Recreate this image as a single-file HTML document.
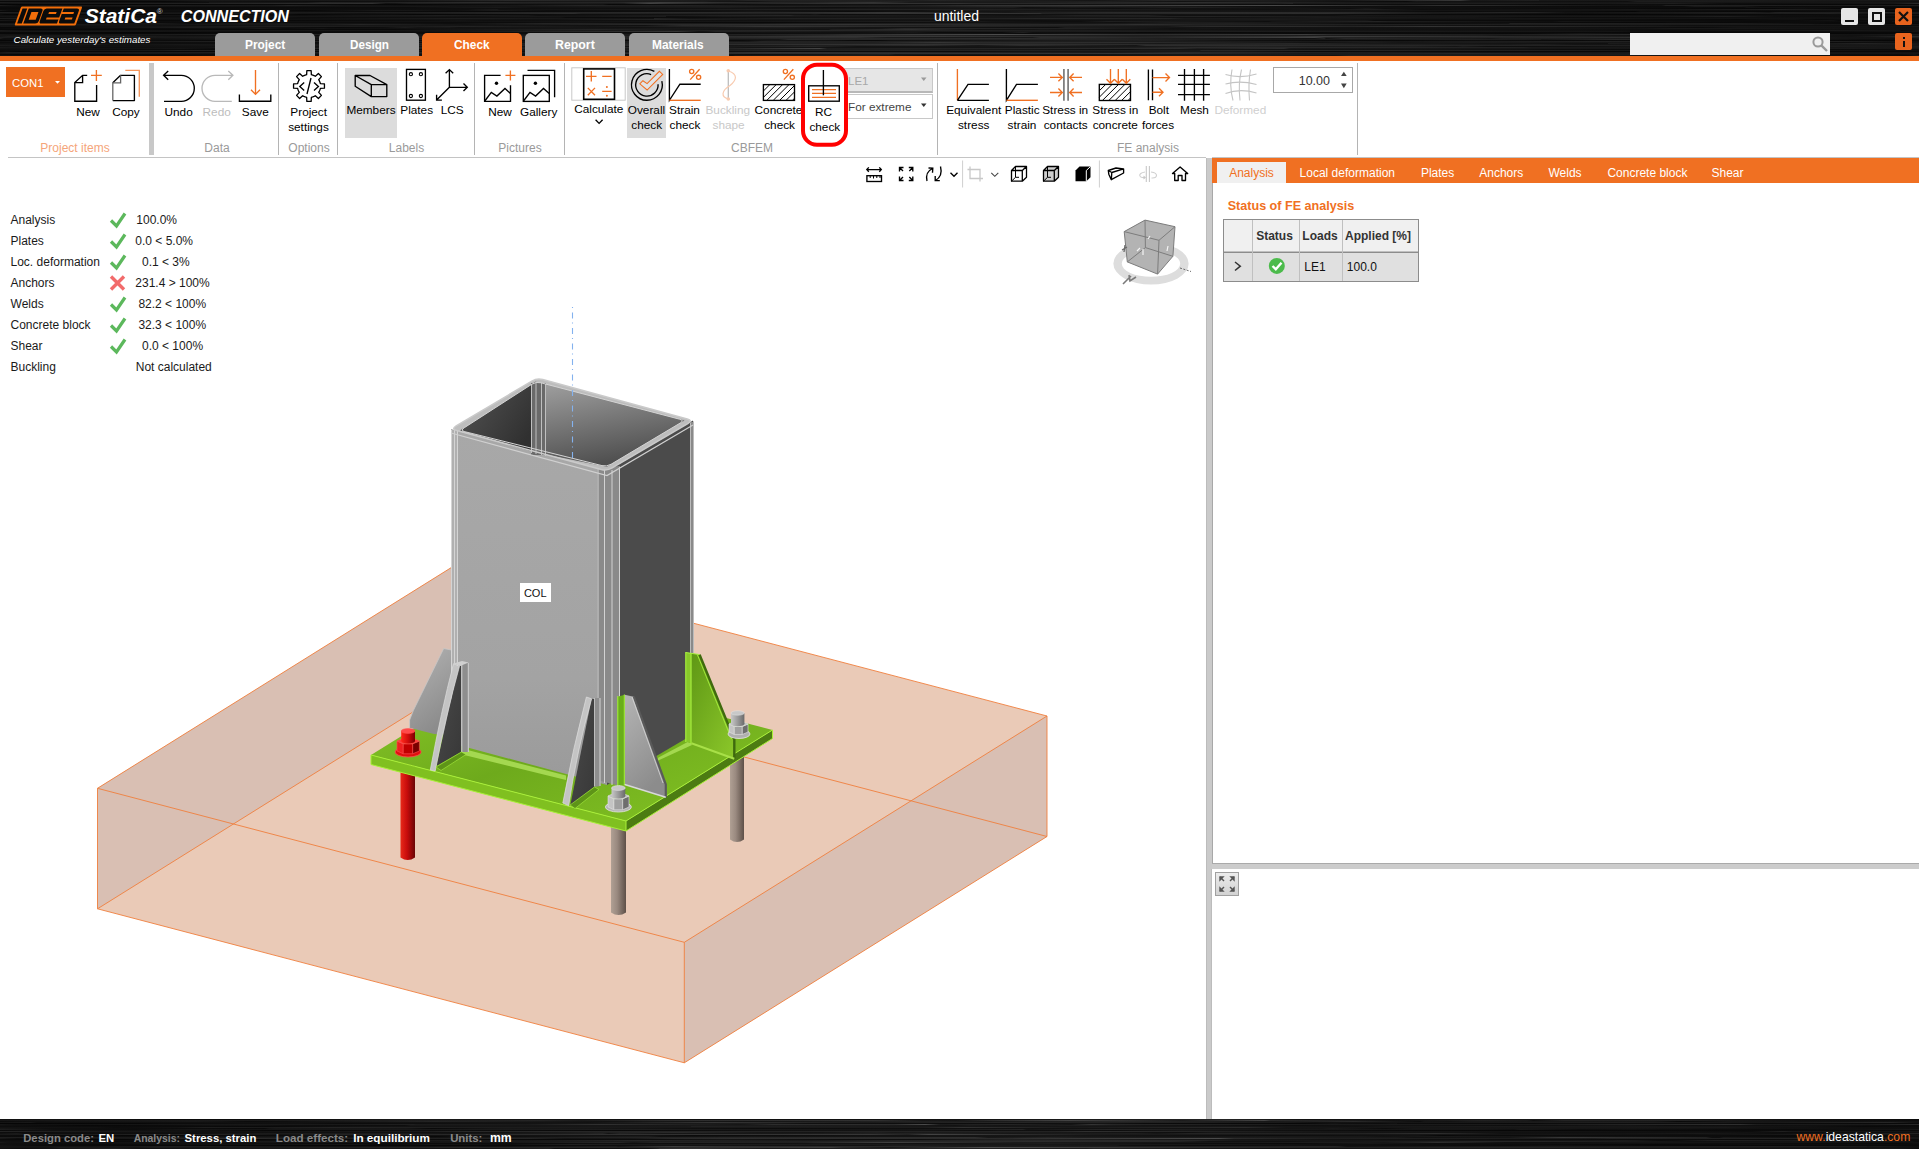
<!DOCTYPE html><html><head><meta charset='utf-8'><style>html,body{margin:0;padding:0;width:1919px;height:1149px;overflow:hidden;background:#fff;position:relative}body{font-family:'Liberation Sans',sans-serif}.t{position:absolute;white-space:pre;line-height:1;font-family:'Liberation Sans',sans-serif}svg{overflow:visible}</style></head><body><svg style='position:absolute;left:0px;top:0px;' width='1919' height='56' viewBox='0 0 1919 56'><defs><linearGradient id='br1_0' x1='0' x2='1' y1='0' y2='0'><stop offset='0.000' stop-color='rgb(30,30,30)'/><stop offset='0.063' stop-color='rgb(20,20,20)'/><stop offset='0.118' stop-color='rgb(25,25,25)'/><stop offset='0.210' stop-color='rgb(24,24,24)'/><stop offset='0.266' stop-color='rgb(42,42,42)'/><stop offset='0.380' stop-color='rgb(27,27,27)'/><stop offset='0.390' stop-color='rgb(36,36,36)'/><stop offset='0.472' stop-color='rgb(29,29,29)'/><stop offset='0.488' stop-color='rgb(37,37,37)'/><stop offset='0.569' stop-color='rgb(21,21,21)'/><stop offset='0.607' stop-color='rgb(38,38,38)'/><stop offset='0.696' stop-color='rgb(23,23,23)'/><stop offset='0.761' stop-color='rgb(56,56,56)'/><stop offset='0.767' stop-color='rgb(24,24,24)'/><stop offset='0.802' stop-color='rgb(32,32,32)'/><stop offset='0.802' stop-color='rgb(25,25,25)'/><stop offset='0.893' stop-color='rgb(27,27,27)'/><stop offset='1.000' stop-color='rgb(23,23,23)'/></linearGradient><linearGradient id='br1_1' x1='0' x2='1' y1='0' y2='0'><stop offset='0.000' stop-color='rgb(9,9,9)'/><stop offset='0.086' stop-color='rgb(8,8,8)'/><stop offset='0.108' stop-color='rgb(18,18,18)'/><stop offset='0.164' stop-color='rgb(13,13,13)'/><stop offset='0.309' stop-color='rgb(24,24,24)'/><stop offset='0.367' stop-color='rgb(27,27,27)'/><stop offset='0.371' stop-color='rgb(22,22,22)'/><stop offset='0.393' stop-color='rgb(19,19,19)'/><stop offset='0.404' stop-color='rgb(29,29,29)'/><stop offset='0.469' stop-color='rgb(33,33,33)'/><stop offset='0.480' stop-color='rgb(27,27,27)'/><stop offset='0.578' stop-color='rgb(30,30,30)'/><stop offset='0.615' stop-color='rgb(18,18,18)'/><stop offset='0.664' stop-color='rgb(27,27,27)'/><stop offset='0.665' stop-color='rgb(25,25,25)'/><stop offset='0.733' stop-color='rgb(10,10,10)'/><stop offset='0.738' stop-color='rgb(21,21,21)'/><stop offset='0.744' stop-color='rgb(18,18,18)'/><stop offset='0.776' stop-color='rgb(18,18,18)'/><stop offset='0.840' stop-color='rgb(16,16,16)'/><stop offset='0.848' stop-color='rgb(15,15,15)'/><stop offset='0.853' stop-color='rgb(29,29,29)'/><stop offset='0.883' stop-color='rgb(28,28,28)'/><stop offset='1.000' stop-color='rgb(16,16,16)'/></linearGradient><linearGradient id='br1_2' x1='0' x2='1' y1='0' y2='0'><stop offset='0.000' stop-color='rgb(30,30,30)'/><stop offset='0.024' stop-color='rgb(20,20,20)'/><stop offset='0.070' stop-color='rgb(17,17,17)'/><stop offset='0.109' stop-color='rgb(14,14,14)'/><stop offset='0.109' stop-color='rgb(22,22,22)'/><stop offset='0.160' stop-color='rgb(23,23,23)'/><stop offset='0.168' stop-color='rgb(36,36,36)'/><stop offset='0.188' stop-color='rgb(31,31,31)'/><stop offset='0.250' stop-color='rgb(44,44,44)'/><stop offset='0.273' stop-color='rgb(35,35,35)'/><stop offset='0.322' stop-color='rgb(37,37,37)'/><stop offset='0.344' stop-color='rgb(61,61,61)'/><stop offset='0.387' stop-color='rgb(40,40,40)'/><stop offset='0.421' stop-color='rgb(34,34,34)'/><stop offset='0.455' stop-color='rgb(51,51,51)'/><stop offset='0.474' stop-color='rgb(26,26,26)'/><stop offset='0.527' stop-color='rgb(26,26,26)'/><stop offset='0.625' stop-color='rgb(46,46,46)'/><stop offset='0.712' stop-color='rgb(23,23,23)'/><stop offset='1.000' stop-color='rgb(21,21,21)'/></linearGradient><linearGradient id='br1_3' x1='0' x2='1' y1='0' y2='0'><stop offset='0.000' stop-color='rgb(18,18,18)'/><stop offset='0.018' stop-color='rgb(25,25,25)'/><stop offset='0.104' stop-color='rgb(33,33,33)'/><stop offset='0.194' stop-color='rgb(48,48,48)'/><stop offset='0.201' stop-color='rgb(19,19,19)'/><stop offset='0.206' stop-color='rgb(20,20,20)'/><stop offset='0.213' stop-color='rgb(30,30,30)'/><stop offset='0.296' stop-color='rgb(28,28,28)'/><stop offset='0.325' stop-color='rgb(27,27,27)'/><stop offset='0.328' stop-color='rgb(36,36,36)'/><stop offset='0.339' stop-color='rgb(67,67,67)'/><stop offset='0.347' stop-color='rgb(53,53,53)'/><stop offset='0.378' stop-color='rgb(31,31,31)'/><stop offset='0.433' stop-color='rgb(49,49,49)'/><stop offset='0.500' stop-color='rgb(49,49,49)'/><stop offset='0.509' stop-color='rgb(42,42,42)'/><stop offset='0.666' stop-color='rgb(30,30,30)'/><stop offset='0.674' stop-color='rgb(37,37,37)'/><stop offset='0.674' stop-color='rgb(26,26,26)'/><stop offset='0.783' stop-color='rgb(29,29,29)'/><stop offset='0.838' stop-color='rgb(24,24,24)'/><stop offset='0.872' stop-color='rgb(30,30,30)'/><stop offset='0.900' stop-color='rgb(13,13,13)'/><stop offset='0.987' stop-color='rgb(21,21,21)'/><stop offset='1.000' stop-color='rgb(43,43,43)'/></linearGradient><linearGradient id='br1_4' x1='0' x2='1' y1='0' y2='0'><stop offset='0.000' stop-color='rgb(5,5,5)'/><stop offset='0.159' stop-color='rgb(9,9,9)'/><stop offset='0.162' stop-color='rgb(10,10,10)'/><stop offset='0.208' stop-color='rgb(7,7,7)'/><stop offset='0.314' stop-color='rgb(19,19,19)'/><stop offset='0.317' stop-color='rgb(9,9,9)'/><stop offset='0.435' stop-color='rgb(17,17,17)'/><stop offset='0.451' stop-color='rgb(16,16,16)'/><stop offset='0.543' stop-color='rgb(18,18,18)'/><stop offset='0.550' stop-color='rgb(16,16,16)'/><stop offset='0.587' stop-color='rgb(18,18,18)'/><stop offset='0.681' stop-color='rgb(11,11,11)'/><stop offset='0.712' stop-color='rgb(13,13,13)'/><stop offset='0.786' stop-color='rgb(13,13,13)'/><stop offset='0.806' stop-color='rgb(10,10,10)'/><stop offset='0.818' stop-color='rgb(9,9,9)'/><stop offset='0.845' stop-color='rgb(14,14,14)'/><stop offset='0.965' stop-color='rgb(8,8,8)'/><stop offset='1.000' stop-color='rgb(9,9,9)'/></linearGradient><linearGradient id='br1_5' x1='0' x2='1' y1='0' y2='0'><stop offset='0.000' stop-color='rgb(28,28,28)'/><stop offset='0.010' stop-color='rgb(14,14,14)'/><stop offset='0.022' stop-color='rgb(22,22,22)'/><stop offset='0.092' stop-color='rgb(29,29,29)'/><stop offset='0.101' stop-color='rgb(26,26,26)'/><stop offset='0.142' stop-color='rgb(26,26,26)'/><stop offset='0.150' stop-color='rgb(35,35,35)'/><stop offset='0.180' stop-color='rgb(21,21,21)'/><stop offset='0.220' stop-color='rgb(17,17,17)'/><stop offset='0.268' stop-color='rgb(23,23,23)'/><stop offset='0.306' stop-color='rgb(37,37,37)'/><stop offset='0.328' stop-color='rgb(31,31,31)'/><stop offset='0.359' stop-color='rgb(33,33,33)'/><stop offset='0.402' stop-color='rgb(21,21,21)'/><stop offset='0.469' stop-color='rgb(27,27,27)'/><stop offset='0.509' stop-color='rgb(48,48,48)'/><stop offset='0.665' stop-color='rgb(71,71,71)'/><stop offset='0.729' stop-color='rgb(35,35,35)'/><stop offset='0.751' stop-color='rgb(47,47,47)'/><stop offset='0.778' stop-color='rgb(40,40,40)'/><stop offset='0.808' stop-color='rgb(28,28,28)'/><stop offset='0.859' stop-color='rgb(16,16,16)'/><stop offset='0.866' stop-color='rgb(17,17,17)'/><stop offset='0.868' stop-color='rgb(32,32,32)'/><stop offset='1.000' stop-color='rgb(29,29,29)'/></linearGradient><linearGradient id='br1_6' x1='0' x2='1' y1='0' y2='0'><stop offset='0.000' stop-color='rgb(13,13,13)'/><stop offset='0.048' stop-color='rgb(17,17,17)'/><stop offset='0.072' stop-color='rgb(19,19,19)'/><stop offset='0.159' stop-color='rgb(17,17,17)'/><stop offset='0.225' stop-color='rgb(22,22,22)'/><stop offset='0.238' stop-color='rgb(19,19,19)'/><stop offset='0.275' stop-color='rgb(21,21,21)'/><stop offset='0.412' stop-color='rgb(32,32,32)'/><stop offset='0.479' stop-color='rgb(28,28,28)'/><stop offset='0.495' stop-color='rgb(31,31,31)'/><stop offset='0.512' stop-color='rgb(36,36,36)'/><stop offset='0.560' stop-color='rgb(39,39,39)'/><stop offset='0.646' stop-color='rgb(16,16,16)'/><stop offset='0.766' stop-color='rgb(13,13,13)'/><stop offset='0.877' stop-color='rgb(11,11,11)'/><stop offset='0.883' stop-color='rgb(24,24,24)'/><stop offset='0.907' stop-color='rgb(24,24,24)'/><stop offset='0.918' stop-color='rgb(10,10,10)'/><stop offset='1.000' stop-color='rgb(12,12,12)'/></linearGradient><linearGradient id='br1_7' x1='0' x2='1' y1='0' y2='0'><stop offset='0.000' stop-color='rgb(10,10,10)'/><stop offset='0.031' stop-color='rgb(10,10,10)'/><stop offset='0.212' stop-color='rgb(12,12,12)'/><stop offset='0.242' stop-color='rgb(21,21,21)'/><stop offset='0.260' stop-color='rgb(24,24,24)'/><stop offset='0.278' stop-color='rgb(17,17,17)'/><stop offset='0.379' stop-color='rgb(25,25,25)'/><stop offset='0.397' stop-color='rgb(19,19,19)'/><stop offset='0.431' stop-color='rgb(14,14,14)'/><stop offset='0.438' stop-color='rgb(14,14,14)'/><stop offset='0.488' stop-color='rgb(23,23,23)'/><stop offset='0.528' stop-color='rgb(27,27,27)'/><stop offset='0.534' stop-color='rgb(15,15,15)'/><stop offset='0.559' stop-color='rgb(23,23,23)'/><stop offset='0.579' stop-color='rgb(21,21,21)'/><stop offset='0.622' stop-color='rgb(31,31,31)'/><stop offset='0.661' stop-color='rgb(18,18,18)'/><stop offset='0.909' stop-color='rgb(11,11,11)'/><stop offset='0.910' stop-color='rgb(17,17,17)'/><stop offset='0.960' stop-color='rgb(13,13,13)'/><stop offset='0.973' stop-color='rgb(11,11,11)'/><stop offset='1.000' stop-color='rgb(7,7,7)'/></linearGradient><linearGradient id='br1_8' x1='0' x2='1' y1='0' y2='0'><stop offset='0.000' stop-color='rgb(9,9,9)'/><stop offset='0.197' stop-color='rgb(13,13,13)'/><stop offset='0.199' stop-color='rgb(13,13,13)'/><stop offset='0.336' stop-color='rgb(16,16,16)'/><stop offset='0.449' stop-color='rgb(22,22,22)'/><stop offset='0.517' stop-color='rgb(21,21,21)'/><stop offset='0.526' stop-color='rgb(20,20,20)'/><stop offset='0.579' stop-color='rgb(14,14,14)'/><stop offset='0.601' stop-color='rgb(18,18,18)'/><stop offset='0.622' stop-color='rgb(16,16,16)'/><stop offset='0.669' stop-color='rgb(18,18,18)'/><stop offset='0.679' stop-color='rgb(20,20,20)'/><stop offset='0.700' stop-color='rgb(14,14,14)'/><stop offset='0.703' stop-color='rgb(12,12,12)'/><stop offset='0.712' stop-color='rgb(22,22,22)'/><stop offset='0.722' stop-color='rgb(13,13,13)'/><stop offset='0.728' stop-color='rgb(15,15,15)'/><stop offset='0.739' stop-color='rgb(15,15,15)'/><stop offset='0.923' stop-color='rgb(7,7,7)'/><stop offset='0.937' stop-color='rgb(13,13,13)'/><stop offset='0.967' stop-color='rgb(6,6,6)'/><stop offset='0.970' stop-color='rgb(9,9,9)'/><stop offset='0.974' stop-color='rgb(9,9,9)'/><stop offset='0.988' stop-color='rgb(6,6,6)'/><stop offset='1.000' stop-color='rgb(11,11,11)'/></linearGradient><linearGradient id='br1_9' x1='0' x2='1' y1='0' y2='0'><stop offset='0.000' stop-color='rgb(11,11,11)'/><stop offset='0.244' stop-color='rgb(15,15,15)'/><stop offset='0.248' stop-color='rgb(20,20,20)'/><stop offset='0.259' stop-color='rgb(26,26,26)'/><stop offset='0.260' stop-color='rgb(17,17,17)'/><stop offset='0.356' stop-color='rgb(26,26,26)'/><stop offset='0.393' stop-color='rgb(31,31,31)'/><stop offset='0.400' stop-color='rgb(32,32,32)'/><stop offset='0.403' stop-color='rgb(32,32,32)'/><stop offset='0.484' stop-color='rgb(34,34,34)'/><stop offset='0.610' stop-color='rgb(24,24,24)'/><stop offset='0.610' stop-color='rgb(17,17,17)'/><stop offset='0.661' stop-color='rgb(15,15,15)'/><stop offset='0.716' stop-color='rgb(30,30,30)'/><stop offset='0.740' stop-color='rgb(13,13,13)'/><stop offset='0.852' stop-color='rgb(23,23,23)'/><stop offset='0.868' stop-color='rgb(19,19,19)'/><stop offset='0.928' stop-color='rgb(32,32,32)'/><stop offset='0.933' stop-color='rgb(29,29,29)'/><stop offset='1.000' stop-color='rgb(14,14,14)'/></linearGradient><linearGradient id='br1_10' x1='0' x2='1' y1='0' y2='0'><stop offset='0.000' stop-color='rgb(23,23,23)'/><stop offset='0.005' stop-color='rgb(11,11,11)'/><stop offset='0.015' stop-color='rgb(13,13,13)'/><stop offset='0.079' stop-color='rgb(15,15,15)'/><stop offset='0.111' stop-color='rgb(15,15,15)'/><stop offset='0.160' stop-color='rgb(8,8,8)'/><stop offset='0.196' stop-color='rgb(23,23,23)'/><stop offset='0.214' stop-color='rgb(22,22,22)'/><stop offset='0.236' stop-color='rgb(15,15,15)'/><stop offset='0.258' stop-color='rgb(25,25,25)'/><stop offset='0.284' stop-color='rgb(14,14,14)'/><stop offset='0.287' stop-color='rgb(13,13,13)'/><stop offset='0.390' stop-color='rgb(18,18,18)'/><stop offset='0.452' stop-color='rgb(17,17,17)'/><stop offset='0.480' stop-color='rgb(17,17,17)'/><stop offset='0.496' stop-color='rgb(27,27,27)'/><stop offset='0.547' stop-color='rgb(20,20,20)'/><stop offset='0.751' stop-color='rgb(19,19,19)'/><stop offset='0.848' stop-color='rgb(19,19,19)'/><stop offset='0.889' stop-color='rgb(14,14,14)'/><stop offset='0.973' stop-color='rgb(13,13,13)'/><stop offset='1.000' stop-color='rgb(8,8,8)'/></linearGradient><linearGradient id='br1_11' x1='0' x2='1' y1='0' y2='0'><stop offset='0.000' stop-color='rgb(7,7,7)'/><stop offset='0.025' stop-color='rgb(8,8,8)'/><stop offset='0.040' stop-color='rgb(6,6,6)'/><stop offset='0.053' stop-color='rgb(11,11,11)'/><stop offset='0.091' stop-color='rgb(13,13,13)'/><stop offset='0.128' stop-color='rgb(18,18,18)'/><stop offset='0.151' stop-color='rgb(14,14,14)'/><stop offset='0.252' stop-color='rgb(9,9,9)'/><stop offset='0.370' stop-color='rgb(15,15,15)'/><stop offset='0.395' stop-color='rgb(21,21,21)'/><stop offset='0.443' stop-color='rgb(11,11,11)'/><stop offset='0.469' stop-color='rgb(16,16,16)'/><stop offset='0.525' stop-color='rgb(21,21,21)'/><stop offset='0.531' stop-color='rgb(24,24,24)'/><stop offset='0.708' stop-color='rgb(19,19,19)'/><stop offset='0.721' stop-color='rgb(16,16,16)'/><stop offset='0.752' stop-color='rgb(11,11,11)'/><stop offset='0.813' stop-color='rgb(15,15,15)'/><stop offset='0.852' stop-color='rgb(6,6,6)'/><stop offset='0.855' stop-color='rgb(13,13,13)'/><stop offset='0.882' stop-color='rgb(9,9,9)'/><stop offset='0.919' stop-color='rgb(8,8,8)'/><stop offset='0.976' stop-color='rgb(14,14,14)'/><stop offset='0.985' stop-color='rgb(6,6,6)'/><stop offset='1.000' stop-color='rgb(11,11,11)'/></linearGradient><linearGradient id='br1_12' x1='0' x2='1' y1='0' y2='0'><stop offset='0.000' stop-color='rgb(32,32,32)'/><stop offset='0.069' stop-color='rgb(17,17,17)'/><stop offset='0.135' stop-color='rgb(25,25,25)'/><stop offset='0.362' stop-color='rgb(43,43,43)'/><stop offset='0.403' stop-color='rgb(40,40,40)'/><stop offset='0.465' stop-color='rgb(54,54,54)'/><stop offset='0.480' stop-color='rgb(45,45,45)'/><stop offset='0.524' stop-color='rgb(23,23,23)'/><stop offset='0.576' stop-color='rgb(42,42,42)'/><stop offset='0.644' stop-color='rgb(43,43,43)'/><stop offset='0.703' stop-color='rgb(41,41,41)'/><stop offset='0.747' stop-color='rgb(27,27,27)'/><stop offset='0.784' stop-color='rgb(37,37,37)'/><stop offset='0.801' stop-color='rgb(34,34,34)'/><stop offset='0.816' stop-color='rgb(19,19,19)'/><stop offset='0.913' stop-color='rgb(31,31,31)'/><stop offset='0.922' stop-color='rgb(22,22,22)'/><stop offset='0.925' stop-color='rgb(31,31,31)'/><stop offset='0.928' stop-color='rgb(33,33,33)'/><stop offset='0.942' stop-color='rgb(29,29,29)'/><stop offset='0.970' stop-color='rgb(30,30,30)'/><stop offset='0.979' stop-color='rgb(22,22,22)'/><stop offset='0.980' stop-color='rgb(43,43,43)'/><stop offset='0.992' stop-color='rgb(24,24,24)'/><stop offset='1.000' stop-color='rgb(23,23,23)'/></linearGradient><linearGradient id='br1_13' x1='0' x2='1' y1='0' y2='0'><stop offset='0.000' stop-color='rgb(18,18,18)'/><stop offset='0.006' stop-color='rgb(21,21,21)'/><stop offset='0.120' stop-color='rgb(25,25,25)'/><stop offset='0.190' stop-color='rgb(18,18,18)'/><stop offset='0.299' stop-color='rgb(45,45,45)'/><stop offset='0.303' stop-color='rgb(34,34,34)'/><stop offset='0.408' stop-color='rgb(33,33,33)'/><stop offset='0.458' stop-color='rgb(51,51,51)'/><stop offset='0.526' stop-color='rgb(51,51,51)'/><stop offset='0.542' stop-color='rgb(49,49,49)'/><stop offset='0.543' stop-color='rgb(36,36,36)'/><stop offset='0.551' stop-color='rgb(33,33,33)'/><stop offset='0.572' stop-color='rgb(36,36,36)'/><stop offset='0.691' stop-color='rgb(46,46,46)'/><stop offset='0.747' stop-color='rgb(25,25,25)'/><stop offset='0.819' stop-color='rgb(15,15,15)'/><stop offset='0.851' stop-color='rgb(19,19,19)'/><stop offset='0.887' stop-color='rgb(25,25,25)'/><stop offset='0.953' stop-color='rgb(32,32,32)'/><stop offset='0.971' stop-color='rgb(22,22,22)'/><stop offset='1.000' stop-color='rgb(25,25,25)'/></linearGradient><linearGradient id='br1_14' x1='0' x2='1' y1='0' y2='0'><stop offset='0.000' stop-color='rgb(13,13,13)'/><stop offset='0.003' stop-color='rgb(6,6,6)'/><stop offset='0.051' stop-color='rgb(9,9,9)'/><stop offset='0.064' stop-color='rgb(6,6,6)'/><stop offset='0.099' stop-color='rgb(8,8,8)'/><stop offset='0.103' stop-color='rgb(12,12,12)'/><stop offset='0.150' stop-color='rgb(13,13,13)'/><stop offset='0.156' stop-color='rgb(7,7,7)'/><stop offset='0.187' stop-color='rgb(13,13,13)'/><stop offset='0.206' stop-color='rgb(12,12,12)'/><stop offset='0.215' stop-color='rgb(8,8,8)'/><stop offset='0.218' stop-color='rgb(8,8,8)'/><stop offset='0.402' stop-color='rgb(21,21,21)'/><stop offset='0.422' stop-color='rgb(16,16,16)'/><stop offset='0.425' stop-color='rgb(21,21,21)'/><stop offset='0.428' stop-color='rgb(13,13,13)'/><stop offset='0.650' stop-color='rgb(19,19,19)'/><stop offset='0.730' stop-color='rgb(10,10,10)'/><stop offset='0.775' stop-color='rgb(10,10,10)'/><stop offset='0.830' stop-color='rgb(6,6,6)'/><stop offset='0.949' stop-color='rgb(11,11,11)'/><stop offset='0.955' stop-color='rgb(13,13,13)'/><stop offset='1.000' stop-color='rgb(9,9,9)'/></linearGradient><linearGradient id='br1_15' x1='0' x2='1' y1='0' y2='0'><stop offset='0.000' stop-color='rgb(15,15,15)'/><stop offset='0.130' stop-color='rgb(19,19,19)'/><stop offset='0.149' stop-color='rgb(13,13,13)'/><stop offset='0.195' stop-color='rgb(23,23,23)'/><stop offset='0.229' stop-color='rgb(29,29,29)'/><stop offset='0.275' stop-color='rgb(22,22,22)'/><stop offset='0.280' stop-color='rgb(15,15,15)'/><stop offset='0.412' stop-color='rgb(38,38,38)'/><stop offset='0.414' stop-color='rgb(30,30,30)'/><stop offset='0.533' stop-color='rgb(18,18,18)'/><stop offset='0.561' stop-color='rgb(32,32,32)'/><stop offset='0.598' stop-color='rgb(30,30,30)'/><stop offset='0.609' stop-color='rgb(16,16,16)'/><stop offset='0.695' stop-color='rgb(15,15,15)'/><stop offset='0.706' stop-color='rgb(23,23,23)'/><stop offset='0.960' stop-color='rgb(13,13,13)'/><stop offset='1.000' stop-color='rgb(19,19,19)'/></linearGradient><linearGradient id='br1_16' x1='0' x2='1' y1='0' y2='0'><stop offset='0.000' stop-color='rgb(21,21,21)'/><stop offset='0.078' stop-color='rgb(13,13,13)'/><stop offset='0.092' stop-color='rgb(13,13,13)'/><stop offset='0.113' stop-color='rgb(15,15,15)'/><stop offset='0.122' stop-color='rgb(15,15,15)'/><stop offset='0.143' stop-color='rgb(20,20,20)'/><stop offset='0.220' stop-color='rgb(22,22,22)'/><stop offset='0.249' stop-color='rgb(19,19,19)'/><stop offset='0.269' stop-color='rgb(24,24,24)'/><stop offset='0.280' stop-color='rgb(24,24,24)'/><stop offset='0.300' stop-color='rgb(21,21,21)'/><stop offset='0.347' stop-color='rgb(28,28,28)'/><stop offset='0.347' stop-color='rgb(15,15,15)'/><stop offset='0.362' stop-color='rgb(18,18,18)'/><stop offset='0.379' stop-color='rgb(24,24,24)'/><stop offset='0.530' stop-color='rgb(22,22,22)'/><stop offset='0.574' stop-color='rgb(28,28,28)'/><stop offset='0.626' stop-color='rgb(35,35,35)'/><stop offset='0.719' stop-color='rgb(20,20,20)'/><stop offset='0.743' stop-color='rgb(22,22,22)'/><stop offset='0.861' stop-color='rgb(23,23,23)'/><stop offset='0.899' stop-color='rgb(30,30,30)'/><stop offset='0.926' stop-color='rgb(14,14,14)'/><stop offset='0.999' stop-color='rgb(11,11,11)'/><stop offset='1.000' stop-color='rgb(11,11,11)'/></linearGradient><linearGradient id='br1_17' x1='0' x2='1' y1='0' y2='0'><stop offset='0.000' stop-color='rgb(11,11,11)'/><stop offset='0.010' stop-color='rgb(16,16,16)'/><stop offset='0.145' stop-color='rgb(18,18,18)'/><stop offset='0.156' stop-color='rgb(13,13,13)'/><stop offset='0.292' stop-color='rgb(17,17,17)'/><stop offset='0.295' stop-color='rgb(11,11,11)'/><stop offset='0.365' stop-color='rgb(12,12,12)'/><stop offset='0.406' stop-color='rgb(18,18,18)'/><stop offset='0.484' stop-color='rgb(22,22,22)'/><stop offset='0.537' stop-color='rgb(22,22,22)'/><stop offset='0.639' stop-color='rgb(16,16,16)'/><stop offset='0.687' stop-color='rgb(25,25,25)'/><stop offset='0.767' stop-color='rgb(21,21,21)'/><stop offset='0.795' stop-color='rgb(12,12,12)'/><stop offset='0.801' stop-color='rgb(12,12,12)'/><stop offset='0.833' stop-color='rgb(13,13,13)'/><stop offset='0.953' stop-color='rgb(16,16,16)'/><stop offset='0.977' stop-color='rgb(10,10,10)'/><stop offset='1.000' stop-color='rgb(11,11,11)'/></linearGradient><linearGradient id='br1_18' x1='0' x2='1' y1='0' y2='0'><stop offset='0.000' stop-color='rgb(29,29,29)'/><stop offset='0.114' stop-color='rgb(18,18,18)'/><stop offset='0.144' stop-color='rgb(13,13,13)'/><stop offset='0.238' stop-color='rgb(29,29,29)'/><stop offset='0.341' stop-color='rgb(19,19,19)'/><stop offset='0.341' stop-color='rgb(35,35,35)'/><stop offset='0.359' stop-color='rgb(20,20,20)'/><stop offset='0.415' stop-color='rgb(33,33,33)'/><stop offset='0.513' stop-color='rgb(31,31,31)'/><stop offset='0.543' stop-color='rgb(38,38,38)'/><stop offset='0.610' stop-color='rgb(36,36,36)'/><stop offset='0.617' stop-color='rgb(26,26,26)'/><stop offset='0.626' stop-color='rgb(26,26,26)'/><stop offset='0.754' stop-color='rgb(20,20,20)'/><stop offset='0.798' stop-color='rgb(22,22,22)'/><stop offset='1.000' stop-color='rgb(15,15,15)'/></linearGradient><linearGradient id='br1_19' x1='0' x2='1' y1='0' y2='0'><stop offset='0.000' stop-color='rgb(9,9,9)'/><stop offset='0.005' stop-color='rgb(12,12,12)'/><stop offset='0.019' stop-color='rgb(16,16,16)'/><stop offset='0.156' stop-color='rgb(17,17,17)'/><stop offset='0.239' stop-color='rgb(19,19,19)'/><stop offset='0.289' stop-color='rgb(18,18,18)'/><stop offset='0.342' stop-color='rgb(36,36,36)'/><stop offset='0.391' stop-color='rgb(23,23,23)'/><stop offset='0.397' stop-color='rgb(22,22,22)'/><stop offset='0.538' stop-color='rgb(21,21,21)'/><stop offset='0.634' stop-color='rgb(23,23,23)'/><stop offset='0.662' stop-color='rgb(27,27,27)'/><stop offset='0.736' stop-color='rgb(14,14,14)'/><stop offset='0.775' stop-color='rgb(17,17,17)'/><stop offset='0.798' stop-color='rgb(18,18,18)'/><stop offset='0.804' stop-color='rgb(16,16,16)'/><stop offset='0.826' stop-color='rgb(15,15,15)'/><stop offset='0.907' stop-color='rgb(9,9,9)'/><stop offset='0.913' stop-color='rgb(12,12,12)'/><stop offset='0.935' stop-color='rgb(16,16,16)'/><stop offset='0.947' stop-color='rgb(9,9,9)'/><stop offset='0.972' stop-color='rgb(16,16,16)'/><stop offset='0.982' stop-color='rgb(14,14,14)'/><stop offset='1.000' stop-color='rgb(16,16,16)'/></linearGradient><linearGradient id='br1_20' x1='0' x2='1' y1='0' y2='0'><stop offset='0.000' stop-color='rgb(23,23,23)'/><stop offset='0.013' stop-color='rgb(15,15,15)'/><stop offset='0.070' stop-color='rgb(15,15,15)'/><stop offset='0.083' stop-color='rgb(9,9,9)'/><stop offset='0.139' stop-color='rgb(9,9,9)'/><stop offset='0.226' stop-color='rgb(14,14,14)'/><stop offset='0.240' stop-color='rgb(19,19,19)'/><stop offset='0.252' stop-color='rgb(15,15,15)'/><stop offset='0.384' stop-color='rgb(16,16,16)'/><stop offset='0.461' stop-color='rgb(19,19,19)'/><stop offset='0.543' stop-color='rgb(14,14,14)'/><stop offset='0.565' stop-color='rgb(16,16,16)'/><stop offset='0.579' stop-color='rgb(17,17,17)'/><stop offset='0.618' stop-color='rgb(22,22,22)'/><stop offset='0.712' stop-color='rgb(22,22,22)'/><stop offset='0.716' stop-color='rgb(11,11,11)'/><stop offset='0.935' stop-color='rgb(11,11,11)'/><stop offset='0.954' stop-color='rgb(18,18,18)'/><stop offset='0.959' stop-color='rgb(8,8,8)'/><stop offset='1.000' stop-color='rgb(14,14,14)'/></linearGradient><linearGradient id='br1_21' x1='0' x2='1' y1='0' y2='0'><stop offset='0.000' stop-color='rgb(10,10,10)'/><stop offset='0.212' stop-color='rgb(18,18,18)'/><stop offset='0.397' stop-color='rgb(21,21,21)'/><stop offset='0.504' stop-color='rgb(31,31,31)'/><stop offset='0.517' stop-color='rgb(20,20,20)'/><stop offset='0.545' stop-color='rgb(14,14,14)'/><stop offset='0.563' stop-color='rgb(14,14,14)'/><stop offset='0.578' stop-color='rgb(31,31,31)'/><stop offset='0.661' stop-color='rgb(14,14,14)'/><stop offset='0.663' stop-color='rgb(20,20,20)'/><stop offset='0.718' stop-color='rgb(36,36,36)'/><stop offset='0.725' stop-color='rgb(30,30,30)'/><stop offset='0.809' stop-color='rgb(14,14,14)'/><stop offset='0.814' stop-color='rgb(21,21,21)'/><stop offset='0.912' stop-color='rgb(10,10,10)'/><stop offset='0.947' stop-color='rgb(13,13,13)'/><stop offset='0.986' stop-color='rgb(11,11,11)'/><stop offset='0.986' stop-color='rgb(18,18,18)'/><stop offset='1.000' stop-color='rgb(8,8,8)'/></linearGradient><linearGradient id='br1_22' x1='0' x2='1' y1='0' y2='0'><stop offset='0.000' stop-color='rgb(8,8,8)'/><stop offset='0.044' stop-color='rgb(12,12,12)'/><stop offset='0.049' stop-color='rgb(10,10,10)'/><stop offset='0.065' stop-color='rgb(8,8,8)'/><stop offset='0.092' stop-color='rgb(12,12,12)'/><stop offset='0.268' stop-color='rgb(12,12,12)'/><stop offset='0.301' stop-color='rgb(17,17,17)'/><stop offset='0.352' stop-color='rgb(10,10,10)'/><stop offset='0.400' stop-color='rgb(9,9,9)'/><stop offset='0.469' stop-color='rgb(14,14,14)'/><stop offset='0.512' stop-color='rgb(17,17,17)'/><stop offset='0.565' stop-color='rgb(17,17,17)'/><stop offset='0.572' stop-color='rgb(18,18,18)'/><stop offset='0.583' stop-color='rgb(15,15,15)'/><stop offset='0.611' stop-color='rgb(29,29,29)'/><stop offset='0.854' stop-color='rgb(7,7,7)'/><stop offset='0.866' stop-color='rgb(8,8,8)'/><stop offset='0.872' stop-color='rgb(11,11,11)'/><stop offset='0.891' stop-color='rgb(8,8,8)'/><stop offset='0.939' stop-color='rgb(12,12,12)'/><stop offset='0.948' stop-color='rgb(12,12,12)'/><stop offset='0.961' stop-color='rgb(8,8,8)'/><stop offset='1.000' stop-color='rgb(10,10,10)'/></linearGradient><linearGradient id='br1_23' x1='0' x2='1' y1='0' y2='0'><stop offset='0.000' stop-color='rgb(24,24,24)'/><stop offset='0.047' stop-color='rgb(11,11,11)'/><stop offset='0.083' stop-color='rgb(26,26,26)'/><stop offset='0.099' stop-color='rgb(13,13,13)'/><stop offset='0.126' stop-color='rgb(25,25,25)'/><stop offset='0.235' stop-color='rgb(14,14,14)'/><stop offset='0.284' stop-color='rgb(36,36,36)'/><stop offset='0.397' stop-color='rgb(22,22,22)'/><stop offset='0.414' stop-color='rgb(28,28,28)'/><stop offset='0.512' stop-color='rgb(31,31,31)'/><stop offset='0.551' stop-color='rgb(21,21,21)'/><stop offset='0.641' stop-color='rgb(32,32,32)'/><stop offset='0.709' stop-color='rgb(14,14,14)'/><stop offset='0.722' stop-color='rgb(11,11,11)'/><stop offset='0.755' stop-color='rgb(14,14,14)'/><stop offset='0.786' stop-color='rgb(19,19,19)'/><stop offset='0.787' stop-color='rgb(33,33,33)'/><stop offset='0.904' stop-color='rgb(28,28,28)'/><stop offset='0.952' stop-color='rgb(10,10,10)'/><stop offset='1.000' stop-color='rgb(7,7,7)'/></linearGradient><linearGradient id='br1_24' x1='0' x2='1' y1='0' y2='0'><stop offset='0.000' stop-color='rgb(31,31,31)'/><stop offset='0.073' stop-color='rgb(20,20,20)'/><stop offset='0.173' stop-color='rgb(28,28,28)'/><stop offset='0.188' stop-color='rgb(37,37,37)'/><stop offset='0.200' stop-color='rgb(32,32,32)'/><stop offset='0.243' stop-color='rgb(18,18,18)'/><stop offset='0.325' stop-color='rgb(39,39,39)'/><stop offset='0.443' stop-color='rgb(52,52,52)'/><stop offset='0.506' stop-color='rgb(40,40,40)'/><stop offset='0.524' stop-color='rgb(38,38,38)'/><stop offset='0.581' stop-color='rgb(43,43,43)'/><stop offset='0.594' stop-color='rgb(48,48,48)'/><stop offset='0.623' stop-color='rgb(34,34,34)'/><stop offset='0.944' stop-color='rgb(26,26,26)'/><stop offset='0.946' stop-color='rgb(23,23,23)'/><stop offset='0.955' stop-color='rgb(24,24,24)'/><stop offset='1.000' stop-color='rgb(18,18,18)'/></linearGradient><linearGradient id='br1_25' x1='0' x2='1' y1='0' y2='0'><stop offset='0.000' stop-color='rgb(19,19,19)'/><stop offset='0.054' stop-color='rgb(20,20,20)'/><stop offset='0.111' stop-color='rgb(15,15,15)'/><stop offset='0.145' stop-color='rgb(22,22,22)'/><stop offset='0.209' stop-color='rgb(22,22,22)'/><stop offset='0.336' stop-color='rgb(16,16,16)'/><stop offset='0.356' stop-color='rgb(42,42,42)'/><stop offset='0.458' stop-color='rgb(32,32,32)'/><stop offset='0.476' stop-color='rgb(30,30,30)'/><stop offset='0.508' stop-color='rgb(39,39,39)'/><stop offset='0.782' stop-color='rgb(15,15,15)'/><stop offset='0.862' stop-color='rgb(18,18,18)'/><stop offset='0.872' stop-color='rgb(15,15,15)'/><stop offset='0.916' stop-color='rgb(15,15,15)'/><stop offset='0.988' stop-color='rgb(15,15,15)'/><stop offset='1.000' stop-color='rgb(10,10,10)'/></linearGradient><linearGradient id='br1_26' x1='0' x2='1' y1='0' y2='0'><stop offset='0.000' stop-color='rgb(18,18,18)'/><stop offset='0.001' stop-color='rgb(21,21,21)'/><stop offset='0.031' stop-color='rgb(14,14,14)'/><stop offset='0.152' stop-color='rgb(32,32,32)'/><stop offset='0.210' stop-color='rgb(25,25,25)'/><stop offset='0.243' stop-color='rgb(35,35,35)'/><stop offset='0.307' stop-color='rgb(21,21,21)'/><stop offset='0.371' stop-color='rgb(38,38,38)'/><stop offset='0.395' stop-color='rgb(51,51,51)'/><stop offset='0.498' stop-color='rgb(36,36,36)'/><stop offset='0.608' stop-color='rgb(22,22,22)'/><stop offset='0.618' stop-color='rgb(36,36,36)'/><stop offset='0.630' stop-color='rgb(43,43,43)'/><stop offset='0.675' stop-color='rgb(44,44,44)'/><stop offset='0.704' stop-color='rgb(36,36,36)'/><stop offset='0.744' stop-color='rgb(52,52,52)'/><stop offset='0.879' stop-color='rgb(22,22,22)'/><stop offset='0.990' stop-color='rgb(18,18,18)'/><stop offset='1.000' stop-color='rgb(23,23,23)'/></linearGradient><linearGradient id='br1_27' x1='0' x2='1' y1='0' y2='0'><stop offset='0.000' stop-color='rgb(8,8,8)'/><stop offset='0.016' stop-color='rgb(9,9,9)'/><stop offset='0.098' stop-color='rgb(28,28,28)'/><stop offset='0.177' stop-color='rgb(9,9,9)'/><stop offset='0.185' stop-color='rgb(11,11,11)'/><stop offset='0.200' stop-color='rgb(14,14,14)'/><stop offset='0.211' stop-color='rgb(28,28,28)'/><stop offset='0.218' stop-color='rgb(20,20,20)'/><stop offset='0.234' stop-color='rgb(23,23,23)'/><stop offset='0.239' stop-color='rgb(17,17,17)'/><stop offset='0.251' stop-color='rgb(20,20,20)'/><stop offset='0.295' stop-color='rgb(22,22,22)'/><stop offset='0.331' stop-color='rgb(17,17,17)'/><stop offset='0.407' stop-color='rgb(29,29,29)'/><stop offset='0.453' stop-color='rgb(19,19,19)'/><stop offset='0.551' stop-color='rgb(14,14,14)'/><stop offset='0.555' stop-color='rgb(28,28,28)'/><stop offset='0.640' stop-color='rgb(17,17,17)'/><stop offset='0.761' stop-color='rgb(19,19,19)'/><stop offset='0.795' stop-color='rgb(19,19,19)'/><stop offset='0.887' stop-color='rgb(11,11,11)'/><stop offset='0.906' stop-color='rgb(19,19,19)'/><stop offset='1.000' stop-color='rgb(16,16,16)'/></linearGradient><linearGradient id='br1_28' x1='0' x2='1' y1='0' y2='0'><stop offset='0.000' stop-color='rgb(10,10,10)'/><stop offset='0.017' stop-color='rgb(14,14,14)'/><stop offset='0.080' stop-color='rgb(11,11,11)'/><stop offset='0.127' stop-color='rgb(15,15,15)'/><stop offset='0.135' stop-color='rgb(26,26,26)'/><stop offset='0.149' stop-color='rgb(11,11,11)'/><stop offset='0.168' stop-color='rgb(21,21,21)'/><stop offset='0.172' stop-color='rgb(16,16,16)'/><stop offset='0.235' stop-color='rgb(18,18,18)'/><stop offset='0.352' stop-color='rgb(25,25,25)'/><stop offset='0.396' stop-color='rgb(23,23,23)'/><stop offset='0.458' stop-color='rgb(20,20,20)'/><stop offset='0.471' stop-color='rgb(39,39,39)'/><stop offset='0.567' stop-color='rgb(32,32,32)'/><stop offset='0.612' stop-color='rgb(16,16,16)'/><stop offset='0.627' stop-color='rgb(21,21,21)'/><stop offset='0.645' stop-color='rgb(19,19,19)'/><stop offset='0.711' stop-color='rgb(17,17,17)'/><stop offset='0.856' stop-color='rgb(19,19,19)'/><stop offset='0.872' stop-color='rgb(25,25,25)'/><stop offset='1.000' stop-color='rgb(16,16,16)'/></linearGradient><linearGradient id='br1_29' x1='0' x2='1' y1='0' y2='0'><stop offset='0.000' stop-color='rgb(8,8,8)'/><stop offset='0.074' stop-color='rgb(9,9,9)'/><stop offset='0.205' stop-color='rgb(9,9,9)'/><stop offset='0.228' stop-color='rgb(18,18,18)'/><stop offset='0.311' stop-color='rgb(37,37,37)'/><stop offset='0.356' stop-color='rgb(22,22,22)'/><stop offset='0.432' stop-color='rgb(18,18,18)'/><stop offset='0.433' stop-color='rgb(28,28,28)'/><stop offset='0.475' stop-color='rgb(47,47,47)'/><stop offset='0.511' stop-color='rgb(18,18,18)'/><stop offset='0.512' stop-color='rgb(19,19,19)'/><stop offset='0.539' stop-color='rgb(19,19,19)'/><stop offset='0.542' stop-color='rgb(22,22,22)'/><stop offset='0.581' stop-color='rgb(18,18,18)'/><stop offset='0.871' stop-color='rgb(15,15,15)'/><stop offset='0.901' stop-color='rgb(15,15,15)'/><stop offset='0.904' stop-color='rgb(14,14,14)'/><stop offset='1.000' stop-color='rgb(17,17,17)'/></linearGradient><linearGradient id='br1_30' x1='0' x2='1' y1='0' y2='0'><stop offset='0.000' stop-color='rgb(25,25,25)'/><stop offset='0.012' stop-color='rgb(16,16,16)'/><stop offset='0.116' stop-color='rgb(21,21,21)'/><stop offset='0.162' stop-color='rgb(23,23,23)'/><stop offset='0.226' stop-color='rgb(20,20,20)'/><stop offset='0.262' stop-color='rgb(23,23,23)'/><stop offset='0.291' stop-color='rgb(28,28,28)'/><stop offset='0.323' stop-color='rgb(25,25,25)'/><stop offset='0.416' stop-color='rgb(40,40,40)'/><stop offset='0.646' stop-color='rgb(22,22,22)'/><stop offset='0.817' stop-color='rgb(17,17,17)'/><stop offset='0.869' stop-color='rgb(12,12,12)'/><stop offset='0.908' stop-color='rgb(21,21,21)'/><stop offset='0.952' stop-color='rgb(25,25,25)'/><stop offset='0.990' stop-color='rgb(19,19,19)'/><stop offset='0.991' stop-color='rgb(10,10,10)'/><stop offset='1.000' stop-color='rgb(19,19,19)'/></linearGradient><linearGradient id='br1_31' x1='0' x2='1' y1='0' y2='0'><stop offset='0.000' stop-color='rgb(22,22,22)'/><stop offset='0.045' stop-color='rgb(24,24,24)'/><stop offset='0.135' stop-color='rgb(14,14,14)'/><stop offset='0.195' stop-color='rgb(12,12,12)'/><stop offset='0.237' stop-color='rgb(21,21,21)'/><stop offset='0.353' stop-color='rgb(54,54,54)'/><stop offset='0.364' stop-color='rgb(20,20,20)'/><stop offset='0.368' stop-color='rgb(22,22,22)'/><stop offset='0.373' stop-color='rgb(35,35,35)'/><stop offset='0.442' stop-color='rgb(23,23,23)'/><stop offset='0.547' stop-color='rgb(26,26,26)'/><stop offset='0.593' stop-color='rgb(28,28,28)'/><stop offset='0.645' stop-color='rgb(28,28,28)'/><stop offset='0.841' stop-color='rgb(20,20,20)'/><stop offset='0.851' stop-color='rgb(15,15,15)'/><stop offset='0.872' stop-color='rgb(10,10,10)'/><stop offset='0.930' stop-color='rgb(11,11,11)'/><stop offset='1.000' stop-color='rgb(18,18,18)'/></linearGradient><linearGradient id='br1_32' x1='0' x2='1' y1='0' y2='0'><stop offset='0.000' stop-color='rgb(9,9,9)'/><stop offset='0.085' stop-color='rgb(6,6,6)'/><stop offset='0.107' stop-color='rgb(8,8,8)'/><stop offset='0.137' stop-color='rgb(10,10,10)'/><stop offset='0.206' stop-color='rgb(11,11,11)'/><stop offset='0.273' stop-color='rgb(12,12,12)'/><stop offset='0.291' stop-color='rgb(13,13,13)'/><stop offset='0.349' stop-color='rgb(10,10,10)'/><stop offset='0.364' stop-color='rgb(14,14,14)'/><stop offset='0.397' stop-color='rgb(18,18,18)'/><stop offset='0.449' stop-color='rgb(16,16,16)'/><stop offset='0.475' stop-color='rgb(23,23,23)'/><stop offset='0.488' stop-color='rgb(12,12,12)'/><stop offset='0.522' stop-color='rgb(12,12,12)'/><stop offset='0.533' stop-color='rgb(32,32,32)'/><stop offset='0.538' stop-color='rgb(16,16,16)'/><stop offset='0.587' stop-color='rgb(11,11,11)'/><stop offset='0.590' stop-color='rgb(13,13,13)'/><stop offset='0.594' stop-color='rgb(9,9,9)'/><stop offset='0.756' stop-color='rgb(12,12,12)'/><stop offset='0.842' stop-color='rgb(9,9,9)'/><stop offset='0.877' stop-color='rgb(8,8,8)'/><stop offset='0.887' stop-color='rgb(7,7,7)'/><stop offset='0.947' stop-color='rgb(9,9,9)'/><stop offset='1.000' stop-color='rgb(9,9,9)'/></linearGradient><linearGradient id='br1_33' x1='0' x2='1' y1='0' y2='0'><stop offset='0.000' stop-color='rgb(8,8,8)'/><stop offset='0.052' stop-color='rgb(8,8,8)'/><stop offset='0.166' stop-color='rgb(12,12,12)'/><stop offset='0.321' stop-color='rgb(13,13,13)'/><stop offset='0.323' stop-color='rgb(18,18,18)'/><stop offset='0.341' stop-color='rgb(11,11,11)'/><stop offset='0.494' stop-color='rgb(19,19,19)'/><stop offset='0.537' stop-color='rgb(11,11,11)'/><stop offset='0.562' stop-color='rgb(21,21,21)'/><stop offset='0.581' stop-color='rgb(17,17,17)'/><stop offset='0.620' stop-color='rgb(19,19,19)'/><stop offset='0.677' stop-color='rgb(9,9,9)'/><stop offset='0.691' stop-color='rgb(12,12,12)'/><stop offset='0.799' stop-color='rgb(9,9,9)'/><stop offset='0.824' stop-color='rgb(21,21,21)'/><stop offset='0.859' stop-color='rgb(9,9,9)'/><stop offset='0.908' stop-color='rgb(10,10,10)'/><stop offset='0.933' stop-color='rgb(14,14,14)'/><stop offset='0.935' stop-color='rgb(6,6,6)'/><stop offset='0.995' stop-color='rgb(9,9,9)'/><stop offset='1.000' stop-color='rgb(11,11,11)'/></linearGradient><linearGradient id='br1_34' x1='0' x2='1' y1='0' y2='0'><stop offset='0.000' stop-color='rgb(21,21,21)'/><stop offset='0.021' stop-color='rgb(14,14,14)'/><stop offset='0.147' stop-color='rgb(39,39,39)'/><stop offset='0.165' stop-color='rgb(33,33,33)'/><stop offset='0.194' stop-color='rgb(36,36,36)'/><stop offset='0.226' stop-color='rgb(17,17,17)'/><stop offset='0.431' stop-color='rgb(38,38,38)'/><stop offset='0.442' stop-color='rgb(45,45,45)'/><stop offset='0.522' stop-color='rgb(77,77,77)'/><stop offset='0.538' stop-color='rgb(66,66,66)'/><stop offset='0.595' stop-color='rgb(47,47,47)'/><stop offset='0.607' stop-color='rgb(45,45,45)'/><stop offset='0.681' stop-color='rgb(61,61,61)'/><stop offset='0.693' stop-color='rgb(44,44,44)'/><stop offset='0.733' stop-color='rgb(36,36,36)'/><stop offset='0.779' stop-color='rgb(28,28,28)'/><stop offset='0.850' stop-color='rgb(43,43,43)'/><stop offset='0.964' stop-color='rgb(19,19,19)'/><stop offset='1.000' stop-color='rgb(26,26,26)'/></linearGradient><linearGradient id='br1_35' x1='0' x2='1' y1='0' y2='0'><stop offset='0.000' stop-color='rgb(21,21,21)'/><stop offset='0.044' stop-color='rgb(26,26,26)'/><stop offset='0.095' stop-color='rgb(16,16,16)'/><stop offset='0.133' stop-color='rgb(18,18,18)'/><stop offset='0.145' stop-color='rgb(16,16,16)'/><stop offset='0.172' stop-color='rgb(15,15,15)'/><stop offset='0.196' stop-color='rgb(27,27,27)'/><stop offset='0.236' stop-color='rgb(18,18,18)'/><stop offset='0.240' stop-color='rgb(17,17,17)'/><stop offset='0.241' stop-color='rgb(18,18,18)'/><stop offset='0.278' stop-color='rgb(28,28,28)'/><stop offset='0.394' stop-color='rgb(25,25,25)'/><stop offset='0.441' stop-color='rgb(45,45,45)'/><stop offset='0.527' stop-color='rgb(29,29,29)'/><stop offset='0.772' stop-color='rgb(28,28,28)'/><stop offset='0.784' stop-color='rgb(21,21,21)'/><stop offset='0.820' stop-color='rgb(26,26,26)'/><stop offset='0.854' stop-color='rgb(18,18,18)'/><stop offset='0.923' stop-color='rgb(23,23,23)'/><stop offset='0.966' stop-color='rgb(17,17,17)'/><stop offset='1.000' stop-color='rgb(21,21,21)'/></linearGradient><linearGradient id='br1_36' x1='0' x2='1' y1='0' y2='0'><stop offset='0.000' stop-color='rgb(21,21,21)'/><stop offset='0.004' stop-color='rgb(29,29,29)'/><stop offset='0.029' stop-color='rgb(27,27,27)'/><stop offset='0.062' stop-color='rgb(32,32,32)'/><stop offset='0.091' stop-color='rgb(23,23,23)'/><stop offset='0.196' stop-color='rgb(25,25,25)'/><stop offset='0.298' stop-color='rgb(34,34,34)'/><stop offset='0.429' stop-color='rgb(52,52,52)'/><stop offset='0.432' stop-color='rgb(52,52,52)'/><stop offset='0.488' stop-color='rgb(54,54,54)'/><stop offset='0.591' stop-color='rgb(33,33,33)'/><stop offset='0.628' stop-color='rgb(40,40,40)'/><stop offset='0.670' stop-color='rgb(47,47,47)'/><stop offset='0.690' stop-color='rgb(62,62,62)'/><stop offset='0.883' stop-color='rgb(21,21,21)'/><stop offset='0.965' stop-color='rgb(18,18,18)'/><stop offset='1.000' stop-color='rgb(43,43,43)'/></linearGradient><linearGradient id='br1_37' x1='0' x2='1' y1='0' y2='0'><stop offset='0.000' stop-color='rgb(29,29,29)'/><stop offset='0.012' stop-color='rgb(24,24,24)'/><stop offset='0.065' stop-color='rgb(24,24,24)'/><stop offset='0.112' stop-color='rgb(26,26,26)'/><stop offset='0.125' stop-color='rgb(24,24,24)'/><stop offset='0.266' stop-color='rgb(31,31,31)'/><stop offset='0.446' stop-color='rgb(47,47,47)'/><stop offset='0.462' stop-color='rgb(26,26,26)'/><stop offset='0.538' stop-color='rgb(24,24,24)'/><stop offset='0.542' stop-color='rgb(44,44,44)'/><stop offset='0.566' stop-color='rgb(44,44,44)'/><stop offset='0.605' stop-color='rgb(38,38,38)'/><stop offset='0.623' stop-color='rgb(46,46,46)'/><stop offset='0.685' stop-color='rgb(67,67,67)'/><stop offset='0.691' stop-color='rgb(35,35,35)'/><stop offset='0.730' stop-color='rgb(29,29,29)'/><stop offset='0.770' stop-color='rgb(36,36,36)'/><stop offset='0.851' stop-color='rgb(46,46,46)'/><stop offset='0.910' stop-color='rgb(26,26,26)'/><stop offset='0.962' stop-color='rgb(20,20,20)'/><stop offset='0.976' stop-color='rgb(19,19,19)'/><stop offset='0.998' stop-color='rgb(29,29,29)'/><stop offset='0.999' stop-color='rgb(27,27,27)'/><stop offset='1.000' stop-color='rgb(30,30,30)'/></linearGradient><linearGradient id='br1_38' x1='0' x2='1' y1='0' y2='0'><stop offset='0.000' stop-color='rgb(28,28,28)'/><stop offset='0.002' stop-color='rgb(14,14,14)'/><stop offset='0.035' stop-color='rgb(12,12,12)'/><stop offset='0.107' stop-color='rgb(22,22,22)'/><stop offset='0.218' stop-color='rgb(20,20,20)'/><stop offset='0.258' stop-color='rgb(37,37,37)'/><stop offset='0.312' stop-color='rgb(27,27,27)'/><stop offset='0.322' stop-color='rgb(38,38,38)'/><stop offset='0.381' stop-color='rgb(33,33,33)'/><stop offset='0.521' stop-color='rgb(45,45,45)'/><stop offset='0.685' stop-color='rgb(16,16,16)'/><stop offset='0.690' stop-color='rgb(36,36,36)'/><stop offset='0.691' stop-color='rgb(17,17,17)'/><stop offset='0.701' stop-color='rgb(38,38,38)'/><stop offset='0.768' stop-color='rgb(26,26,26)'/><stop offset='0.777' stop-color='rgb(22,22,22)'/><stop offset='0.782' stop-color='rgb(29,29,29)'/><stop offset='0.798' stop-color='rgb(32,32,32)'/><stop offset='0.898' stop-color='rgb(20,20,20)'/><stop offset='0.899' stop-color='rgb(23,23,23)'/><stop offset='0.980' stop-color='rgb(19,19,19)'/><stop offset='0.996' stop-color='rgb(12,12,12)'/><stop offset='1.000' stop-color='rgb(21,21,21)'/></linearGradient><linearGradient id='br1_39' x1='0' x2='1' y1='0' y2='0'><stop offset='0.000' stop-color='rgb(11,11,11)'/><stop offset='0.028' stop-color='rgb(24,24,24)'/><stop offset='0.028' stop-color='rgb(17,17,17)'/><stop offset='0.084' stop-color='rgb(16,16,16)'/><stop offset='0.130' stop-color='rgb(21,21,21)'/><stop offset='0.233' stop-color='rgb(31,31,31)'/><stop offset='0.406' stop-color='rgb(22,22,22)'/><stop offset='0.411' stop-color='rgb(41,41,41)'/><stop offset='0.492' stop-color='rgb(35,35,35)'/><stop offset='0.583' stop-color='rgb(35,35,35)'/><stop offset='0.673' stop-color='rgb(23,23,23)'/><stop offset='0.766' stop-color='rgb(31,31,31)'/><stop offset='0.803' stop-color='rgb(28,28,28)'/><stop offset='0.803' stop-color='rgb(22,22,22)'/><stop offset='0.841' stop-color='rgb(40,40,40)'/><stop offset='0.971' stop-color='rgb(14,14,14)'/><stop offset='0.971' stop-color='rgb(14,14,14)'/><stop offset='1.000' stop-color='rgb(13,13,13)'/></linearGradient><linearGradient id='br1_40' x1='0' x2='1' y1='0' y2='0'><stop offset='0.000' stop-color='rgb(7,7,7)'/><stop offset='0.069' stop-color='rgb(7,7,7)'/><stop offset='0.074' stop-color='rgb(13,13,13)'/><stop offset='0.113' stop-color='rgb(9,9,9)'/><stop offset='0.120' stop-color='rgb(9,9,9)'/><stop offset='0.158' stop-color='rgb(13,13,13)'/><stop offset='0.168' stop-color='rgb(10,10,10)'/><stop offset='0.290' stop-color='rgb(13,13,13)'/><stop offset='0.336' stop-color='rgb(11,11,11)'/><stop offset='0.386' stop-color='rgb(11,11,11)'/><stop offset='0.401' stop-color='rgb(21,21,21)'/><stop offset='0.433' stop-color='rgb(18,18,18)'/><stop offset='0.446' stop-color='rgb(9,9,9)'/><stop offset='0.458' stop-color='rgb(9,9,9)'/><stop offset='0.464' stop-color='rgb(16,16,16)'/><stop offset='0.601' stop-color='rgb(32,32,32)'/><stop offset='0.652' stop-color='rgb(15,15,15)'/><stop offset='0.705' stop-color='rgb(9,9,9)'/><stop offset='0.721' stop-color='rgb(8,8,8)'/><stop offset='0.772' stop-color='rgb(13,13,13)'/><stop offset='0.823' stop-color='rgb(9,9,9)'/><stop offset='0.828' stop-color='rgb(11,11,11)'/><stop offset='0.896' stop-color='rgb(10,10,10)'/><stop offset='0.984' stop-color='rgb(7,7,7)'/><stop offset='1.000' stop-color='rgb(9,9,9)'/></linearGradient><linearGradient id='br1_41' x1='0' x2='1' y1='0' y2='0'><stop offset='0.000' stop-color='rgb(17,17,17)'/><stop offset='0.023' stop-color='rgb(26,26,26)'/><stop offset='0.026' stop-color='rgb(16,16,16)'/><stop offset='0.044' stop-color='rgb(15,15,15)'/><stop offset='0.052' stop-color='rgb(20,20,20)'/><stop offset='0.065' stop-color='rgb(23,23,23)'/><stop offset='0.131' stop-color='rgb(34,34,34)'/><stop offset='0.194' stop-color='rgb(25,25,25)'/><stop offset='0.208' stop-color='rgb(38,38,38)'/><stop offset='0.219' stop-color='rgb(27,27,27)'/><stop offset='0.272' stop-color='rgb(20,20,20)'/><stop offset='0.317' stop-color='rgb(30,30,30)'/><stop offset='0.390' stop-color='rgb(24,24,24)'/><stop offset='0.397' stop-color='rgb(36,36,36)'/><stop offset='0.411' stop-color='rgb(34,34,34)'/><stop offset='0.593' stop-color='rgb(28,28,28)'/><stop offset='0.689' stop-color='rgb(25,25,25)'/><stop offset='0.706' stop-color='rgb(28,28,28)'/><stop offset='0.728' stop-color='rgb(23,23,23)'/><stop offset='0.832' stop-color='rgb(34,34,34)'/><stop offset='0.879' stop-color='rgb(31,31,31)'/><stop offset='0.880' stop-color='rgb(31,31,31)'/><stop offset='0.910' stop-color='rgb(30,30,30)'/><stop offset='0.957' stop-color='rgb(31,31,31)'/><stop offset='1.000' stop-color='rgb(14,14,14)'/></linearGradient><linearGradient id='br1_42' x1='0' x2='1' y1='0' y2='0'><stop offset='0.000' stop-color='rgb(12,12,12)'/><stop offset='0.130' stop-color='rgb(15,15,15)'/><stop offset='0.167' stop-color='rgb(13,13,13)'/><stop offset='0.255' stop-color='rgb(14,14,14)'/><stop offset='0.277' stop-color='rgb(20,20,20)'/><stop offset='0.384' stop-color='rgb(37,37,37)'/><stop offset='0.455' stop-color='rgb(32,32,32)'/><stop offset='0.489' stop-color='rgb(54,54,54)'/><stop offset='0.512' stop-color='rgb(41,41,41)'/><stop offset='0.589' stop-color='rgb(46,46,46)'/><stop offset='0.677' stop-color='rgb(19,19,19)'/><stop offset='0.687' stop-color='rgb(17,17,17)'/><stop offset='0.716' stop-color='rgb(27,27,27)'/><stop offset='0.730' stop-color='rgb(21,21,21)'/><stop offset='0.767' stop-color='rgb(27,27,27)'/><stop offset='0.844' stop-color='rgb(22,22,22)'/><stop offset='0.888' stop-color='rgb(10,10,10)'/><stop offset='0.960' stop-color='rgb(12,12,12)'/><stop offset='1.000' stop-color='rgb(17,17,17)'/></linearGradient><linearGradient id='br1_43' x1='0' x2='1' y1='0' y2='0'><stop offset='0.000' stop-color='rgb(16,16,16)'/><stop offset='0.005' stop-color='rgb(17,17,17)'/><stop offset='0.163' stop-color='rgb(12,12,12)'/><stop offset='0.174' stop-color='rgb(26,26,26)'/><stop offset='0.222' stop-color='rgb(32,32,32)'/><stop offset='0.438' stop-color='rgb(33,33,33)'/><stop offset='0.538' stop-color='rgb(38,38,38)'/><stop offset='0.605' stop-color='rgb(24,24,24)'/><stop offset='0.620' stop-color='rgb(29,29,29)'/><stop offset='0.673' stop-color='rgb(39,39,39)'/><stop offset='0.715' stop-color='rgb(24,24,24)'/><stop offset='0.838' stop-color='rgb(16,16,16)'/><stop offset='0.838' stop-color='rgb(27,27,27)'/><stop offset='0.937' stop-color='rgb(19,19,19)'/><stop offset='0.971' stop-color='rgb(36,36,36)'/><stop offset='1.000' stop-color='rgb(21,21,21)'/></linearGradient><linearGradient id='br1_44' x1='0' x2='1' y1='0' y2='0'><stop offset='0.000' stop-color='rgb(20,20,20)'/><stop offset='0.016' stop-color='rgb(18,18,18)'/><stop offset='0.051' stop-color='rgb(25,25,25)'/><stop offset='0.058' stop-color='rgb(17,17,17)'/><stop offset='0.095' stop-color='rgb(24,24,24)'/><stop offset='0.111' stop-color='rgb(22,22,22)'/><stop offset='0.152' stop-color='rgb(30,30,30)'/><stop offset='0.173' stop-color='rgb(19,19,19)'/><stop offset='0.208' stop-color='rgb(23,23,23)'/><stop offset='0.252' stop-color='rgb(26,26,26)'/><stop offset='0.384' stop-color='rgb(45,45,45)'/><stop offset='0.472' stop-color='rgb(51,51,51)'/><stop offset='0.549' stop-color='rgb(46,46,46)'/><stop offset='0.655' stop-color='rgb(38,38,38)'/><stop offset='0.742' stop-color='rgb(29,29,29)'/><stop offset='0.785' stop-color='rgb(24,24,24)'/><stop offset='0.801' stop-color='rgb(30,30,30)'/><stop offset='0.821' stop-color='rgb(19,19,19)'/><stop offset='0.996' stop-color='rgb(26,26,26)'/><stop offset='1.000' stop-color='rgb(20,20,20)'/></linearGradient><linearGradient id='br1_45' x1='0' x2='1' y1='0' y2='0'><stop offset='0.000' stop-color='rgb(26,26,26)'/><stop offset='0.024' stop-color='rgb(21,21,21)'/><stop offset='0.055' stop-color='rgb(16,16,16)'/><stop offset='0.139' stop-color='rgb(24,24,24)'/><stop offset='0.213' stop-color='rgb(28,28,28)'/><stop offset='0.249' stop-color='rgb(38,38,38)'/><stop offset='0.273' stop-color='rgb(32,32,32)'/><stop offset='0.338' stop-color='rgb(40,40,40)'/><stop offset='0.341' stop-color='rgb(21,21,21)'/><stop offset='0.396' stop-color='rgb(24,24,24)'/><stop offset='0.482' stop-color='rgb(42,42,42)'/><stop offset='0.510' stop-color='rgb(23,23,23)'/><stop offset='0.532' stop-color='rgb(43,43,43)'/><stop offset='0.592' stop-color='rgb(21,21,21)'/><stop offset='0.597' stop-color='rgb(46,46,46)'/><stop offset='1.000' stop-color='rgb(22,22,22)'/></linearGradient><linearGradient id='br1_46' x1='0' x2='1' y1='0' y2='0'><stop offset='0.000' stop-color='rgb(16,16,16)'/><stop offset='0.018' stop-color='rgb(20,20,20)'/><stop offset='0.041' stop-color='rgb(17,17,17)'/><stop offset='0.051' stop-color='rgb(17,17,17)'/><stop offset='0.348' stop-color='rgb(20,20,20)'/><stop offset='0.405' stop-color='rgb(33,33,33)'/><stop offset='0.424' stop-color='rgb(37,37,37)'/><stop offset='0.447' stop-color='rgb(19,19,19)'/><stop offset='0.596' stop-color='rgb(24,24,24)'/><stop offset='0.651' stop-color='rgb(34,34,34)'/><stop offset='0.686' stop-color='rgb(27,27,27)'/><stop offset='0.694' stop-color='rgb(26,26,26)'/><stop offset='0.736' stop-color='rgb(30,30,30)'/><stop offset='0.759' stop-color='rgb(19,19,19)'/><stop offset='0.762' stop-color='rgb(26,26,26)'/><stop offset='0.775' stop-color='rgb(14,14,14)'/><stop offset='0.813' stop-color='rgb(15,15,15)'/><stop offset='0.858' stop-color='rgb(21,21,21)'/><stop offset='0.915' stop-color='rgb(11,11,11)'/><stop offset='0.928' stop-color='rgb(31,31,31)'/><stop offset='0.994' stop-color='rgb(22,22,22)'/><stop offset='1.000' stop-color='rgb(29,29,29)'/></linearGradient><linearGradient id='br1_47' x1='0' x2='1' y1='0' y2='0'><stop offset='0.000' stop-color='rgb(24,24,24)'/><stop offset='0.050' stop-color='rgb(13,13,13)'/><stop offset='0.108' stop-color='rgb(18,18,18)'/><stop offset='0.114' stop-color='rgb(25,25,25)'/><stop offset='0.147' stop-color='rgb(18,18,18)'/><stop offset='0.223' stop-color='rgb(32,32,32)'/><stop offset='0.252' stop-color='rgb(22,22,22)'/><stop offset='0.347' stop-color='rgb(46,46,46)'/><stop offset='0.390' stop-color='rgb(19,19,19)'/><stop offset='0.536' stop-color='rgb(19,19,19)'/><stop offset='0.579' stop-color='rgb(26,26,26)'/><stop offset='0.624' stop-color='rgb(42,42,42)'/><stop offset='0.728' stop-color='rgb(37,37,37)'/><stop offset='0.794' stop-color='rgb(32,32,32)'/><stop offset='0.798' stop-color='rgb(26,26,26)'/><stop offset='0.932' stop-color='rgb(19,19,19)'/><stop offset='1.000' stop-color='rgb(25,25,25)'/></linearGradient><linearGradient id='br1_48' x1='0' x2='1' y1='0' y2='0'><stop offset='0.000' stop-color='rgb(18,18,18)'/><stop offset='0.053' stop-color='rgb(17,17,17)'/><stop offset='0.094' stop-color='rgb(21,21,21)'/><stop offset='0.112' stop-color='rgb(13,13,13)'/><stop offset='0.127' stop-color='rgb(24,24,24)'/><stop offset='0.141' stop-color='rgb(24,24,24)'/><stop offset='0.211' stop-color='rgb(53,53,53)'/><stop offset='0.223' stop-color='rgb(18,18,18)'/><stop offset='0.230' stop-color='rgb(19,19,19)'/><stop offset='0.275' stop-color='rgb(31,31,31)'/><stop offset='0.295' stop-color='rgb(24,24,24)'/><stop offset='0.359' stop-color='rgb(30,30,30)'/><stop offset='0.373' stop-color='rgb(30,30,30)'/><stop offset='0.427' stop-color='rgb(68,68,68)'/><stop offset='0.431' stop-color='rgb(29,29,29)'/><stop offset='0.614' stop-color='rgb(44,44,44)'/><stop offset='0.624' stop-color='rgb(30,30,30)'/><stop offset='0.669' stop-color='rgb(43,43,43)'/><stop offset='0.672' stop-color='rgb(24,24,24)'/><stop offset='0.759' stop-color='rgb(22,22,22)'/><stop offset='0.840' stop-color='rgb(22,22,22)'/><stop offset='0.922' stop-color='rgb(28,28,28)'/><stop offset='1.000' stop-color='rgb(21,21,21)'/></linearGradient><linearGradient id='br1_49' x1='0' x2='1' y1='0' y2='0'><stop offset='0.000' stop-color='rgb(14,14,14)'/><stop offset='0.029' stop-color='rgb(17,17,17)'/><stop offset='0.075' stop-color='rgb(11,11,11)'/><stop offset='0.223' stop-color='rgb(9,9,9)'/><stop offset='0.276' stop-color='rgb(21,21,21)'/><stop offset='0.283' stop-color='rgb(24,24,24)'/><stop offset='0.330' stop-color='rgb(26,26,26)'/><stop offset='0.339' stop-color='rgb(26,26,26)'/><stop offset='0.343' stop-color='rgb(14,14,14)'/><stop offset='0.346' stop-color='rgb(19,19,19)'/><stop offset='0.353' stop-color='rgb(28,28,28)'/><stop offset='0.472' stop-color='rgb(29,29,29)'/><stop offset='0.589' stop-color='rgb(14,14,14)'/><stop offset='0.595' stop-color='rgb(21,21,21)'/><stop offset='0.691' stop-color='rgb(17,17,17)'/><stop offset='0.754' stop-color='rgb(19,19,19)'/><stop offset='0.795' stop-color='rgb(16,16,16)'/><stop offset='0.804' stop-color='rgb(13,13,13)'/><stop offset='0.845' stop-color='rgb(10,10,10)'/><stop offset='0.945' stop-color='rgb(17,17,17)'/><stop offset='0.950' stop-color='rgb(10,10,10)'/><stop offset='1.000' stop-color='rgb(12,12,12)'/></linearGradient><linearGradient id='br1_50' x1='0' x2='1' y1='0' y2='0'><stop offset='0.000' stop-color='rgb(10,10,10)'/><stop offset='0.040' stop-color='rgb(25,25,25)'/><stop offset='0.051' stop-color='rgb(21,21,21)'/><stop offset='0.084' stop-color='rgb(25,25,25)'/><stop offset='0.093' stop-color='rgb(32,32,32)'/><stop offset='0.206' stop-color='rgb(23,23,23)'/><stop offset='0.241' stop-color='rgb(25,25,25)'/><stop offset='0.324' stop-color='rgb(18,18,18)'/><stop offset='0.335' stop-color='rgb(61,61,61)'/><stop offset='0.344' stop-color='rgb(22,22,22)'/><stop offset='0.384' stop-color='rgb(32,32,32)'/><stop offset='0.519' stop-color='rgb(34,34,34)'/><stop offset='0.625' stop-color='rgb(25,25,25)'/><stop offset='0.626' stop-color='rgb(39,39,39)'/><stop offset='0.721' stop-color='rgb(36,36,36)'/><stop offset='0.746' stop-color='rgb(32,32,32)'/><stop offset='0.795' stop-color='rgb(30,30,30)'/><stop offset='0.895' stop-color='rgb(18,18,18)'/><stop offset='0.921' stop-color='rgb(23,23,23)'/><stop offset='0.931' stop-color='rgb(11,11,11)'/><stop offset='0.938' stop-color='rgb(14,14,14)'/><stop offset='0.956' stop-color='rgb(18,18,18)'/><stop offset='1.000' stop-color='rgb(12,12,12)'/></linearGradient><linearGradient id='br1_51' x1='0' x2='1' y1='0' y2='0'><stop offset='0.000' stop-color='rgb(9,9,9)'/><stop offset='0.003' stop-color='rgb(11,11,11)'/><stop offset='0.010' stop-color='rgb(6,6,6)'/><stop offset='0.018' stop-color='rgb(11,11,11)'/><stop offset='0.042' stop-color='rgb(7,7,7)'/><stop offset='0.073' stop-color='rgb(10,10,10)'/><stop offset='0.097' stop-color='rgb(8,8,8)'/><stop offset='0.162' stop-color='rgb(8,8,8)'/><stop offset='0.176' stop-color='rgb(9,9,9)'/><stop offset='0.209' stop-color='rgb(13,13,13)'/><stop offset='0.220' stop-color='rgb(16,16,16)'/><stop offset='0.254' stop-color='rgb(15,15,15)'/><stop offset='0.382' stop-color='rgb(16,16,16)'/><stop offset='0.399' stop-color='rgb(17,17,17)'/><stop offset='0.406' stop-color='rgb(11,11,11)'/><stop offset='0.503' stop-color='rgb(11,11,11)'/><stop offset='0.531' stop-color='rgb(19,19,19)'/><stop offset='0.641' stop-color='rgb(25,25,25)'/><stop offset='0.680' stop-color='rgb(10,10,10)'/><stop offset='0.697' stop-color='rgb(10,10,10)'/><stop offset='0.722' stop-color='rgb(12,12,12)'/><stop offset='0.780' stop-color='rgb(8,8,8)'/><stop offset='1.000' stop-color='rgb(8,8,8)'/></linearGradient><linearGradient id='br1_52' x1='0' x2='1' y1='0' y2='0'><stop offset='0.000' stop-color='rgb(21,21,21)'/><stop offset='0.004' stop-color='rgb(28,28,28)'/><stop offset='0.040' stop-color='rgb(27,27,27)'/><stop offset='0.061' stop-color='rgb(27,27,27)'/><stop offset='0.141' stop-color='rgb(30,30,30)'/><stop offset='0.153' stop-color='rgb(30,30,30)'/><stop offset='0.208' stop-color='rgb(38,38,38)'/><stop offset='0.260' stop-color='rgb(25,25,25)'/><stop offset='0.280' stop-color='rgb(29,29,29)'/><stop offset='0.287' stop-color='rgb(40,40,40)'/><stop offset='0.337' stop-color='rgb(32,32,32)'/><stop offset='0.406' stop-color='rgb(52,52,52)'/><stop offset='0.483' stop-color='rgb(37,37,37)'/><stop offset='0.580' stop-color='rgb(25,25,25)'/><stop offset='0.617' stop-color='rgb(42,42,42)'/><stop offset='0.688' stop-color='rgb(31,31,31)'/><stop offset='0.775' stop-color='rgb(20,20,20)'/><stop offset='0.857' stop-color='rgb(24,24,24)'/><stop offset='0.858' stop-color='rgb(14,14,14)'/><stop offset='0.863' stop-color='rgb(28,28,28)'/><stop offset='1.000' stop-color='rgb(17,17,17)'/></linearGradient><linearGradient id='br1_53' x1='0' x2='1' y1='0' y2='0'><stop offset='0.000' stop-color='rgb(20,20,20)'/><stop offset='0.005' stop-color='rgb(22,22,22)'/><stop offset='0.054' stop-color='rgb(24,24,24)'/><stop offset='0.073' stop-color='rgb(26,26,26)'/><stop offset='0.127' stop-color='rgb(17,17,17)'/><stop offset='0.193' stop-color='rgb(29,29,29)'/><stop offset='0.268' stop-color='rgb(21,21,21)'/><stop offset='0.285' stop-color='rgb(19,19,19)'/><stop offset='0.312' stop-color='rgb(42,42,42)'/><stop offset='0.589' stop-color='rgb(52,52,52)'/><stop offset='0.678' stop-color='rgb(26,26,26)'/><stop offset='0.718' stop-color='rgb(30,30,30)'/><stop offset='0.764' stop-color='rgb(39,39,39)'/><stop offset='0.810' stop-color='rgb(30,30,30)'/><stop offset='0.832' stop-color='rgb(27,27,27)'/><stop offset='1.000' stop-color='rgb(20,20,20)'/></linearGradient><linearGradient id='br1_54' x1='0' x2='1' y1='0' y2='0'><stop offset='0.000' stop-color='rgb(8,8,8)'/><stop offset='0.052' stop-color='rgb(8,8,8)'/><stop offset='0.156' stop-color='rgb(16,16,16)'/><stop offset='0.201' stop-color='rgb(16,16,16)'/><stop offset='0.282' stop-color='rgb(15,15,15)'/><stop offset='0.373' stop-color='rgb(18,18,18)'/><stop offset='0.392' stop-color='rgb(13,13,13)'/><stop offset='0.444' stop-color='rgb(24,24,24)'/><stop offset='0.463' stop-color='rgb(31,31,31)'/><stop offset='0.467' stop-color='rgb(20,20,20)'/><stop offset='0.477' stop-color='rgb(23,23,23)'/><stop offset='0.562' stop-color='rgb(19,19,19)'/><stop offset='0.663' stop-color='rgb(25,25,25)'/><stop offset='0.670' stop-color='rgb(26,26,26)'/><stop offset='0.863' stop-color='rgb(28,28,28)'/><stop offset='0.918' stop-color='rgb(15,15,15)'/><stop offset='0.990' stop-color='rgb(11,11,11)'/><stop offset='0.998' stop-color='rgb(18,18,18)'/><stop offset='1.000' stop-color='rgb(7,7,7)'/></linearGradient><linearGradient id='br1_55' x1='0' x2='1' y1='0' y2='0'><stop offset='0.000' stop-color='rgb(17,17,17)'/><stop offset='0.093' stop-color='rgb(9,9,9)'/><stop offset='0.123' stop-color='rgb(20,20,20)'/><stop offset='0.144' stop-color='rgb(17,17,17)'/><stop offset='0.211' stop-color='rgb(20,20,20)'/><stop offset='0.316' stop-color='rgb(21,21,21)'/><stop offset='0.382' stop-color='rgb(16,16,16)'/><stop offset='0.383' stop-color='rgb(23,23,23)'/><stop offset='0.439' stop-color='rgb(27,27,27)'/><stop offset='0.452' stop-color='rgb(27,27,27)'/><stop offset='0.484' stop-color='rgb(14,14,14)'/><stop offset='0.530' stop-color='rgb(16,16,16)'/><stop offset='0.647' stop-color='rgb(27,27,27)'/><stop offset='0.696' stop-color='rgb(19,19,19)'/><stop offset='0.703' stop-color='rgb(32,32,32)'/><stop offset='0.911' stop-color='rgb(18,18,18)'/><stop offset='0.976' stop-color='rgb(11,11,11)'/><stop offset='0.994' stop-color='rgb(9,9,9)'/><stop offset='1.000' stop-color='rgb(24,24,24)'/></linearGradient></defs><rect x='0' y='0' width='1919' height='1' fill='url(#br1_0)'/><rect x='0' y='1' width='1919' height='1' fill='url(#br1_1)'/><rect x='0' y='2' width='1919' height='1' fill='url(#br1_2)'/><rect x='0' y='3' width='1919' height='1' fill='url(#br1_3)'/><rect x='0' y='4' width='1919' height='1' fill='url(#br1_4)'/><rect x='0' y='5' width='1919' height='1' fill='url(#br1_5)'/><rect x='0' y='6' width='1919' height='1' fill='url(#br1_6)'/><rect x='0' y='7' width='1919' height='1' fill='url(#br1_7)'/><rect x='0' y='8' width='1919' height='1' fill='url(#br1_8)'/><rect x='0' y='9' width='1919' height='1' fill='url(#br1_9)'/><rect x='0' y='10' width='1919' height='1' fill='url(#br1_10)'/><rect x='0' y='11' width='1919' height='1' fill='url(#br1_11)'/><rect x='0' y='12' width='1919' height='1' fill='url(#br1_12)'/><rect x='0' y='13' width='1919' height='1' fill='url(#br1_13)'/><rect x='0' y='14' width='1919' height='1' fill='url(#br1_14)'/><rect x='0' y='15' width='1919' height='1' fill='url(#br1_15)'/><rect x='0' y='16' width='1919' height='1' fill='url(#br1_16)'/><rect x='0' y='17' width='1919' height='1' fill='url(#br1_17)'/><rect x='0' y='18' width='1919' height='1' fill='url(#br1_18)'/><rect x='0' y='19' width='1919' height='1' fill='url(#br1_19)'/><rect x='0' y='20' width='1919' height='1' fill='url(#br1_20)'/><rect x='0' y='21' width='1919' height='1' fill='url(#br1_21)'/><rect x='0' y='22' width='1919' height='1' fill='url(#br1_22)'/><rect x='0' y='23' width='1919' height='1' fill='url(#br1_23)'/><rect x='0' y='24' width='1919' height='1' fill='url(#br1_24)'/><rect x='0' y='25' width='1919' height='1' fill='url(#br1_25)'/><rect x='0' y='26' width='1919' height='1' fill='url(#br1_26)'/><rect x='0' y='27' width='1919' height='1' fill='url(#br1_27)'/><rect x='0' y='28' width='1919' height='1' fill='url(#br1_28)'/><rect x='0' y='29' width='1919' height='1' fill='url(#br1_29)'/><rect x='0' y='30' width='1919' height='1' fill='url(#br1_30)'/><rect x='0' y='31' width='1919' height='1' fill='url(#br1_31)'/><rect x='0' y='32' width='1919' height='1' fill='url(#br1_32)'/><rect x='0' y='33' width='1919' height='1' fill='url(#br1_33)'/><rect x='0' y='34' width='1919' height='1' fill='url(#br1_34)'/><rect x='0' y='35' width='1919' height='1' fill='url(#br1_35)'/><rect x='0' y='36' width='1919' height='1' fill='url(#br1_36)'/><rect x='0' y='37' width='1919' height='1' fill='url(#br1_37)'/><rect x='0' y='38' width='1919' height='1' fill='url(#br1_38)'/><rect x='0' y='39' width='1919' height='1' fill='url(#br1_39)'/><rect x='0' y='40' width='1919' height='1' fill='url(#br1_40)'/><rect x='0' y='41' width='1919' height='1' fill='url(#br1_41)'/><rect x='0' y='42' width='1919' height='1' fill='url(#br1_42)'/><rect x='0' y='43' width='1919' height='1' fill='url(#br1_43)'/><rect x='0' y='44' width='1919' height='1' fill='url(#br1_44)'/><rect x='0' y='45' width='1919' height='1' fill='url(#br1_45)'/><rect x='0' y='46' width='1919' height='1' fill='url(#br1_46)'/><rect x='0' y='47' width='1919' height='1' fill='url(#br1_47)'/><rect x='0' y='48' width='1919' height='1' fill='url(#br1_48)'/><rect x='0' y='49' width='1919' height='1' fill='url(#br1_49)'/><rect x='0' y='50' width='1919' height='1' fill='url(#br1_50)'/><rect x='0' y='51' width='1919' height='1' fill='url(#br1_51)'/><rect x='0' y='52' width='1919' height='1' fill='url(#br1_52)'/><rect x='0' y='53' width='1919' height='1' fill='url(#br1_53)'/><rect x='0' y='54' width='1919' height='1' fill='url(#br1_54)'/><rect x='0' y='55' width='1919' height='1' fill='url(#br1_55)'/></svg><svg style='position:absolute;left:0px;top:0px;' width='300' height='56' viewBox='0 0 300 56'>
<g transform='matrix(1,0,-0.359,1,9.15,0)'>
<rect x='14.4' y='6.6' width='61.2' height='18.8' rx='1.2' fill='#f26e0a'/>
<g fill='#0b0b0b'>
<rect x='16.4' y='8.4' width='4.7' height='15.2'/>
<path d='M22.6,8.4 L34.5,8.4 Q37.2,8.4 37.2,11 L37.2,21 Q37.2,23.6 34.5,23.6 L22.6,23.6 Z'/>
<path d='M40.6,8.4 L56.3,8.4 L56.3,23.6 L40.6,23.6 Q38.2,23.6 38.2,21 L38.2,11 Q38.2,8.4 40.6,8.4 Z'/>
<path d='M57.6,8.4 L70.8,8.4 Q73.6,8.4 73.6,11 L73.6,23.6 L60.2,23.6 Q57.6,23.6 57.6,21 Z'/>
</g>
<g fill='#f26e0a'>
<rect x='26.6' y='12' width='7' height='7.7'/>
<rect x='44.2' y='12' width='7.6' height='1.9'/>
<rect x='43.8' y='17.4' width='13' height='2.1'/>
<rect x='57' y='12' width='12.2' height='1.9'/>
<rect x='62.5' y='17.4' width='7.2' height='2.1'/>
</g></g></svg><span class='t' style='left:84.66px;top:5px;font-size:21.01px;font-weight:700;color:#fff;font-style:italic;'>StatiCa</span><span class='t' style='left:156.68px;top:8px;font-size:8.00px;font-weight:400;color:#ccc;font-style:normal;'>®</span><span class='t' style='left:180.86px;top:8px;font-size:16.09px;font-weight:700;color:#fff;font-style:italic;'>CONNECTION</span><span class='t' style='left:13.61px;top:35px;font-size:9.75px;font-weight:400;color:#fff;font-style:italic;'>Calculate yesterday's estimates</span><span class='t' style='left:933.92px;top:9px;font-size:14.00px;font-weight:400;color:#fff;font-style:normal;'>untitled</span><div style='position:absolute;left:1841px;top:8px;width:17px;height:17px;background:#e6e6e6;border-radius:2px'></div><div style='position:absolute;left:1845px;top:20px;width:9px;height:2px;background:#111;'></div><div style='position:absolute;left:1868px;top:8px;width:17px;height:17px;background:#e6e6e6;border-radius:2px'></div><div style='position:absolute;left:1871.5px;top:11.5px;width:10px;height:10px;background:transparent;border:2px solid #111;box-sizing:border-box'></div><div style='position:absolute;left:1895px;top:8px;width:17px;height:17px;background:#e8641e;border-radius:2px'></div><svg style='position:absolute;left:1895px;top:8px;' width='17' height='17' viewBox='1895 8 17 17'><path d='M1899,12 L1908,21 M1908,12 L1899,21' stroke='#111' stroke-width='2.2'/></svg><div style='position:absolute;left:1895px;top:33px;width:17px;height:17px;background:#e8641e;border-radius:2px'></div><div style='position:absolute;left:1902.5px;top:37px;width:2.2px;height:2.4px;background:#111;'></div><div style='position:absolute;left:1902.5px;top:40.5px;width:2.2px;height:6.5px;background:#111;'></div><div style='position:absolute;left:1630px;top:33px;width:200px;height:22px;background:#f0f0f0;'></div><svg style='position:absolute;left:1810px;top:34px;' width='20' height='20' viewBox='1810 34 20 20'><circle cx='1818' cy='42' r='4.6' fill='none' stroke='#9a9a9a' stroke-width='2'/><path d='M1821.3,45.3 L1827,51' stroke='#9a9a9a' stroke-width='2.4'/></svg><div style='position:absolute;left:215px;top:33px;width:100px;height:24px;background:#9b9b9b;border-radius:5px 5px 0 0'></div><span class='t' style='left:244.86px;top:38px;font-size:13.50px;font-weight:700;color:#fff;font-style:normal;transform:scaleX(0.8798);transform-origin:0 0;'>Project</span><div style='position:absolute;left:319px;top:33px;width:100px;height:24px;background:#9b9b9b;border-radius:5px 5px 0 0'></div><span class='t' style='left:349.76px;top:38px;font-size:13.50px;font-weight:700;color:#fff;font-style:normal;transform:scaleX(0.8659);transform-origin:0 0;'>Design</span><div style='position:absolute;left:422px;top:33px;width:100px;height:24px;background:#f07022;border-radius:5px 5px 0 0'></div><span class='t' style='left:453.96px;top:38px;font-size:13.50px;font-weight:700;color:#fff;font-style:normal;transform:scaleX(0.8778);transform-origin:0 0;'>Check</span><div style='position:absolute;left:525px;top:33px;width:100px;height:24px;background:#9b9b9b;border-radius:5px 5px 0 0'></div><span class='t' style='left:554.76px;top:38px;font-size:13.50px;font-weight:700;color:#fff;font-style:normal;transform:scaleX(0.9145);transform-origin:0 0;'>Report</span><div style='position:absolute;left:628.5px;top:33px;width:100px;height:24px;background:#9b9b9b;border-radius:5px 5px 0 0'></div><span class='t' style='left:651.96px;top:38px;font-size:13.50px;font-weight:700;color:#fff;font-style:normal;transform:scaleX(0.8812);transform-origin:0 0;'>Materials</span><div style='position:absolute;left:0px;top:56px;width:1919px;height:5px;background:#f07022;'></div><div style='position:absolute;left:0px;top:61px;width:1919px;height:97px;background:#fff;'></div><div style='position:absolute;left:8px;top:157px;width:1198px;height:1px;background:#c4c4c4;'></div><div style='position:absolute;left:1212px;top:157px;width:707px;height:1px;background:#c4c4c4;'></div><div style='position:absolute;left:149px;top:63px;width:5px;height:92px;background:#c8c8c8;'></div><div style='position:absolute;left:278px;top:63px;width:1px;height:92px;background:#b4b4b4;'></div><div style='position:absolute;left:337px;top:63px;width:1px;height:92px;background:#b4b4b4;'></div><div style='position:absolute;left:474px;top:63px;width:1px;height:92px;background:#b4b4b4;'></div><div style='position:absolute;left:564px;top:63px;width:1px;height:92px;background:#b4b4b4;'></div><div style='position:absolute;left:937px;top:63px;width:1px;height:92px;background:#b4b4b4;'></div><div style='position:absolute;left:1357px;top:63px;width:1px;height:92px;background:#b4b4b4;'></div><div style='position:absolute;left:345px;top:68px;width:52px;height:70px;background:#dcdcdc;'></div><div style='position:absolute;left:627px;top:68px;width:39px;height:70px;background:#dcdcdc;'></div><div style='position:absolute;left:6px;top:67px;width:59px;height:30px;background:#f07022;'></div><span class='t' style='left:12.05px;top:78px;font-size:11.34px;font-weight:400;color:#fff;font-style:normal;'>CON1</span><svg style='position:absolute;left:54px;top:80px;' width='8' height='5' viewBox='54 80 8 5'><path d='M55,81 L60,81 L57.5,83.8 Z' fill='#fff'/></svg><span class='t' style='left:40.32px;top:142px;font-size:12.00px;font-weight:400;color:#f5a57a;font-style:normal;'>Project items</span><span class='t' style='left:204.32px;top:142px;font-size:12.00px;font-weight:400;color:#9a9a9a;font-style:normal;'>Data</span><span class='t' style='left:288.32px;top:142px;font-size:12.00px;font-weight:400;color:#9a9a9a;font-style:normal;'>Options</span><span class='t' style='left:388.81px;top:142px;font-size:12.00px;font-weight:400;color:#9a9a9a;font-style:normal;'>Labels</span><span class='t' style='left:498.32px;top:142px;font-size:12.00px;font-weight:400;color:#9a9a9a;font-style:normal;'>Pictures</span><span class='t' style='left:731.00px;top:142px;font-size:12.00px;font-weight:400;color:#9a9a9a;font-style:normal;'>CBFEM</span><span class='t' style='left:1116.98px;top:142px;font-size:12.00px;font-weight:400;color:#9a9a9a;font-style:normal;'>FE analysis</span><span class='t' style='left:76.20px;top:107px;font-size:11.80px;font-weight:400;color:#000;font-style:normal;'>New</span><span class='t' style='left:112.23px;top:107px;font-size:11.80px;font-weight:400;color:#000;font-style:normal;'>Copy</span><span class='t' style='left:164.50px;top:107px;font-size:11.80px;font-weight:400;color:#000;font-style:normal;'>Undo</span><span class='t' style='left:202.60px;top:107px;font-size:11.80px;font-weight:400;color:#bdbdbd;font-style:normal;'>Redo</span><span class='t' style='left:241.85px;top:107px;font-size:11.80px;font-weight:400;color:#000;font-style:normal;'>Save</span><span class='t' style='left:290.34px;top:107px;font-size:11.80px;font-weight:400;color:#000;font-style:normal;'>Project</span><span class='t' style='left:288.17px;top:122px;font-size:11.80px;font-weight:400;color:#000;font-style:normal;'>settings</span><span class='t' style='left:346.41px;top:105px;font-size:11.80px;font-weight:400;color:#000;font-style:normal;'>Members</span><span class='t' style='left:400.30px;top:105px;font-size:11.80px;font-weight:400;color:#000;font-style:normal;'>Plates</span><span class='t' style='left:440.72px;top:105px;font-size:11.80px;font-weight:400;color:#000;font-style:normal;'>LCS</span><span class='t' style='left:488.20px;top:107px;font-size:11.80px;font-weight:400;color:#000;font-style:normal;'>New</span><span class='t' style='left:520.01px;top:107px;font-size:11.80px;font-weight:400;color:#000;font-style:normal;'>Gallery</span><span class='t' style='left:574.21px;top:104px;font-size:11.80px;font-weight:400;color:#000;font-style:normal;'>Calculate</span><span class='t' style='left:627.81px;top:105px;font-size:11.80px;font-weight:400;color:#000;font-style:normal;'>Overall</span><span class='t' style='left:631.29px;top:120px;font-size:11.80px;font-weight:400;color:#000;font-style:normal;'>check</span><span class='t' style='left:669.09px;top:105px;font-size:11.80px;font-weight:400;color:#000;font-style:normal;'>Strain</span><span class='t' style='left:669.59px;top:120px;font-size:11.80px;font-weight:400;color:#000;font-style:normal;'>check</span><span class='t' style='left:705.50px;top:105px;font-size:11.80px;font-weight:400;color:#c8c8c8;font-style:normal;'>Buckling</span><span class='t' style='left:712.52px;top:120px;font-size:11.80px;font-weight:400;color:#c8c8c8;font-style:normal;'>shape</span><span class='t' style='left:754.56px;top:105px;font-size:11.80px;font-weight:400;color:#000;font-style:normal;'>Concrete</span><span class='t' style='left:764.19px;top:120px;font-size:11.80px;font-weight:400;color:#000;font-style:normal;'>check</span><span class='t' style='left:815.08px;top:107px;font-size:11.80px;font-weight:400;color:#000;font-style:normal;'>RC</span><span class='t' style='left:809.39px;top:122px;font-size:11.80px;font-weight:400;color:#000;font-style:normal;'>check</span><span class='t' style='left:946.15px;top:105px;font-size:11.80px;font-weight:400;color:#000;font-style:normal;'>Equivalent</span><span class='t' style='left:957.97px;top:120px;font-size:11.80px;font-weight:400;color:#000;font-style:normal;'>stress</span><span class='t' style='left:1004.83px;top:105px;font-size:11.80px;font-weight:400;color:#000;font-style:normal;'>Plastic</span><span class='t' style='left:1007.57px;top:120px;font-size:11.80px;font-weight:400;color:#000;font-style:normal;'>strain</span><span class='t' style='left:1042.25px;top:105px;font-size:11.80px;font-weight:400;color:#000;font-style:normal;'>Stress in</span><span class='t' style='left:1043.73px;top:120px;font-size:11.80px;font-weight:400;color:#000;font-style:normal;'>contacts</span><span class='t' style='left:1092.35px;top:105px;font-size:11.80px;font-weight:400;color:#000;font-style:normal;'>Stress in</span><span class='t' style='left:1092.67px;top:120px;font-size:11.80px;font-weight:400;color:#000;font-style:normal;'>concrete</span><span class='t' style='left:1148.64px;top:105px;font-size:11.80px;font-weight:400;color:#000;font-style:normal;'>Bolt</span><span class='t' style='left:1141.94px;top:120px;font-size:11.80px;font-weight:400;color:#000;font-style:normal;'>forces</span><span class='t' style='left:1180.07px;top:105px;font-size:11.80px;font-weight:400;color:#000;font-style:normal;'>Mesh</span><span class='t' style='left:1214.40px;top:105px;font-size:11.80px;font-weight:400;color:#cfcfcf;font-style:normal;'>Deformed</span><div style='position:absolute;left:844px;top:67.5px;width:89px;height:25px;background:#e6e6e6;border:1px solid #c8c8c8;border-bottom:2px solid #b8b8b8;box-sizing:border-box'></div><span class='t' style='left:848.04px;top:76px;font-size:11.50px;font-weight:400;color:#a8a8a8;font-style:normal;'>LE1</span><svg style='position:absolute;left:918px;top:75px;' width='10' height='8' viewBox='918 75 10 8'><path d='M921,77.5 L926.5,77.5 L923.75,81 Z' fill='#9a9a9a'/></svg><div style='position:absolute;left:844px;top:93.5px;width:89px;height:25px;background:#fff;border:1px solid #c8c8c8;box-sizing:border-box'></div><span class='t' style='left:848.03px;top:101px;font-size:11.77px;font-weight:400;color:#444;font-style:normal;'>For extreme</span><svg style='position:absolute;left:918px;top:101px;' width='10' height='8' viewBox='918 101 10 8'><path d='M921,103.5 L926.5,103.5 L923.75,107 Z' fill='#333'/></svg><div style='position:absolute;left:1273px;top:67px;width:80px;height:26px;background:#fff;border:1px solid #a8a8a8;box-sizing:border-box'></div><span class='t' style='left:1298.72px;top:75px;font-size:12.50px;font-weight:400;color:#333;font-style:normal;'>10.00</span><svg style='position:absolute;left:1338px;top:70px;' width='12' height='20' viewBox='1338 70 12 20'><path d='M1341,76 L1346.7,76 L1343.85,71.7 Z M1341,83.6 L1346.7,83.6 L1343.85,88.2 Z' fill='#444'/></svg><div style='position:absolute;left:1206px;top:158px;width:6px;height:961px;background:#cacaca;'></div><div style='position:absolute;left:1206px;top:158px;width:1px;height:961px;background:#bcbcbc;'></div><div style='position:absolute;left:1211px;top:869px;width:1px;height:250px;background:#bcbcbc;'></div><span class='t' style='left:10.52px;top:214px;font-size:12.00px;font-weight:400;color:#1a1a1a;font-style:normal;'>Analysis</span><span class='t' style='left:136.32px;top:214px;font-size:12.00px;font-weight:400;color:#1a1a1a;font-style:normal;'>100.0%</span><svg style='position:absolute;left:108px;top:210.5px;' width='20' height='18' viewBox='108 210.5 20 18'><path d='M111,220.0 L116.5,225.5 L125,213.0' fill='none' stroke='#5cb85c' stroke-width='3.2' stroke-linejoin='miter'/></svg><span class='t' style='left:10.52px;top:235px;font-size:12.00px;font-weight:400;color:#1a1a1a;font-style:normal;'>Plates</span><span class='t' style='left:135.32px;top:235px;font-size:12.00px;font-weight:400;color:#1a1a1a;font-style:normal;'>0.0 &lt; 5.0%</span><svg style='position:absolute;left:108px;top:231.5px;' width='20' height='18' viewBox='108 231.5 20 18'><path d='M111,241.0 L116.5,246.5 L125,234.0' fill='none' stroke='#5cb85c' stroke-width='3.2' stroke-linejoin='miter'/></svg><span class='t' style='left:10.52px;top:256px;font-size:12.00px;font-weight:400;color:#1a1a1a;font-style:normal;'>Loc. deformation</span><span class='t' style='left:142.02px;top:256px;font-size:12.00px;font-weight:400;color:#1a1a1a;font-style:normal;'>0.1 &lt; 3%</span><svg style='position:absolute;left:108px;top:252.5px;' width='20' height='18' viewBox='108 252.5 20 18'><path d='M111,262.0 L116.5,267.5 L125,255.0' fill='none' stroke='#5cb85c' stroke-width='3.2' stroke-linejoin='miter'/></svg><span class='t' style='left:10.52px;top:277px;font-size:12.00px;font-weight:400;color:#1a1a1a;font-style:normal;'>Anchors</span><span class='t' style='left:135.32px;top:277px;font-size:12.00px;font-weight:400;color:#1a1a1a;font-style:normal;'>231.4 &gt; 100%</span><svg style='position:absolute;left:108px;top:273.5px;' width='20' height='18' viewBox='108 273.5 20 18'><path d='M111,276.0 L124,289.0 M124,276.0 L111,289.0' fill='none' stroke='#f26b6b' stroke-width='3.4'/></svg><span class='t' style='left:10.52px;top:298px;font-size:12.00px;font-weight:400;color:#1a1a1a;font-style:normal;'>Welds</span><span class='t' style='left:138.42px;top:298px;font-size:12.00px;font-weight:400;color:#1a1a1a;font-style:normal;'>82.2 &lt; 100%</span><svg style='position:absolute;left:108px;top:294.5px;' width='20' height='18' viewBox='108 294.5 20 18'><path d='M111,304.0 L116.5,309.5 L125,297.0' fill='none' stroke='#5cb85c' stroke-width='3.2' stroke-linejoin='miter'/></svg><span class='t' style='left:10.52px;top:319px;font-size:12.00px;font-weight:400;color:#1a1a1a;font-style:normal;'>Concrete block</span><span class='t' style='left:138.42px;top:319px;font-size:12.00px;font-weight:400;color:#1a1a1a;font-style:normal;'>32.3 &lt; 100%</span><svg style='position:absolute;left:108px;top:315.5px;' width='20' height='18' viewBox='108 315.5 20 18'><path d='M111,325.0 L116.5,330.5 L125,318.0' fill='none' stroke='#5cb85c' stroke-width='3.2' stroke-linejoin='miter'/></svg><span class='t' style='left:10.52px;top:340px;font-size:12.00px;font-weight:400;color:#1a1a1a;font-style:normal;'>Shear</span><span class='t' style='left:142.02px;top:340px;font-size:12.00px;font-weight:400;color:#1a1a1a;font-style:normal;'>0.0 &lt; 100%</span><svg style='position:absolute;left:108px;top:336.5px;' width='20' height='18' viewBox='108 336.5 20 18'><path d='M111,346.0 L116.5,351.5 L125,339.0' fill='none' stroke='#5cb85c' stroke-width='3.2' stroke-linejoin='miter'/></svg><span class='t' style='left:10.52px;top:361px;font-size:12.00px;font-weight:400;color:#1a1a1a;font-style:normal;'>Buckling</span><span class='t' style='left:135.72px;top:361px;font-size:12.00px;font-weight:400;color:#1a1a1a;font-style:normal;'>Not calculated</span><div style='position:absolute;left:1212px;top:158px;width:707px;height:25px;background:#f07022;'></div><div style='position:absolute;left:1217px;top:162px;width:69px;height:21px;background:#f0f0f0;'></div><span class='t' style='left:1229.16px;top:167px;font-size:12.00px;font-weight:400;color:#f07022;font-style:normal;'>Analysis</span><span class='t' style='left:1299.60px;top:167px;font-size:12.00px;font-weight:400;color:#fff;font-style:normal;'>Local deformation</span><span class='t' style='left:1420.92px;top:167px;font-size:12.00px;font-weight:400;color:#fff;font-style:normal;'>Plates</span><span class='t' style='left:1479.28px;top:167px;font-size:12.00px;font-weight:400;color:#fff;font-style:normal;'>Anchors</span><span class='t' style='left:1548.44px;top:167px;font-size:12.00px;font-weight:400;color:#fff;font-style:normal;'>Welds</span><span class='t' style='left:1607.43px;top:167px;font-size:12.00px;font-weight:400;color:#fff;font-style:normal;'>Concrete block</span><span class='t' style='left:1711.48px;top:167px;font-size:12.00px;font-weight:400;color:#fff;font-style:normal;'>Shear</span><span class='t' style='left:1227.70px;top:200px;font-size:12.58px;font-weight:700;color:#f07022;font-style:normal;'>Status of FE analysis</span><div style='position:absolute;left:1223px;top:218.5px;width:196px;height:63px;background:#8c8c8c;'></div><div style='position:absolute;left:1224px;top:219.5px;width:194px;height:32px;background:#f0f0f0;'></div><div style='position:absolute;left:1224px;top:252.5px;width:194px;height:28px;background:#e0e0e0;'></div><div style='position:absolute;left:1252px;top:219.5px;width:1px;height:61px;background:#c0c0c0;'></div><div style='position:absolute;left:1299px;top:219.5px;width:1px;height:61px;background:#c0c0c0;'></div><div style='position:absolute;left:1342px;top:219.5px;width:1px;height:61px;background:#c0c0c0;'></div><div style='position:absolute;left:1224px;top:251.3px;width:194px;height:1.2px;background:#c0c0c0;'></div><span class='t' style='left:1256.16px;top:230px;font-size:12.00px;font-weight:700;color:#333;font-style:normal;'>Status</span><span class='t' style='left:1302.33px;top:230px;font-size:12.00px;font-weight:700;color:#333;font-style:normal;'>Loads</span><span class='t' style='left:1345.00px;top:230px;font-size:12.00px;font-weight:700;color:#333;font-style:normal;'>Applied [%]</span><svg style='position:absolute;left:1230px;top:258px;' width='15' height='16' viewBox='1230 258 15 16'><path d='M1235,262 L1240.3,266.2 L1235,270.5' fill='none' stroke='#333' stroke-width='1.5'/></svg><svg style='position:absolute;left:1266px;top:255px;' width='22' height='22' viewBox='1266 255 22 22'><circle cx='1276.8' cy='265.9' r='8' fill='#4cbb4c'/><path d='M1272.5,266 L1275.8,269.2 L1281.5,262.8' fill='none' stroke='#fff' stroke-width='2.4'/></svg><span class='t' style='left:1304.32px;top:261px;font-size:12.00px;font-weight:400;color:#111;font-style:normal;'>LE1</span><span class='t' style='left:1346.82px;top:261px;font-size:12.00px;font-weight:400;color:#111;font-style:normal;'>100.0</span><div style='position:absolute;left:1212px;top:183px;width:1px;height:681px;background:#a8a8a8;'></div><div style='position:absolute;left:1212px;top:863px;width:707px;height:1px;background:#aaaaaa;'></div><div style='position:absolute;left:1212px;top:864px;width:707px;height:5px;background:#cccccc;'></div><div style='position:absolute;left:1215px;top:872px;width:24px;height:24px;background:linear-gradient(#ececec,#d2d2d2);border:1px solid #a0a0a0;box-sizing:border-box'></div><svg style='position:absolute;left:1215px;top:872px;' width='24' height='24' viewBox='1215 872 24 24'><g stroke='#555' stroke-width='1.4' fill='#555'><path d='M1220,877 L1224,881'/><path d='M1220,877 L1223,877 L1220,880Z'/><path d='M1234,877 L1230,881'/><path d='M1234,877 L1231,877 L1234,880Z'/><path d='M1220,891 L1224,887'/><path d='M1220,891 L1223,891 L1220,888Z'/><path d='M1234,891 L1230,887'/><path d='M1234,891 L1231,891 L1234,888Z'/></g></svg><svg style='position:absolute;left:0px;top:1119px;' width='1919' height='30' viewBox='0 1119 1919 30'><defs><linearGradient id='br2_0' x1='0' x2='1' y1='0' y2='0'><stop offset='0.000' stop-color='rgb(16,16,16)'/><stop offset='0.036' stop-color='rgb(19,19,19)'/><stop offset='0.092' stop-color='rgb(10,10,10)'/><stop offset='0.169' stop-color='rgb(16,16,16)'/><stop offset='0.212' stop-color='rgb(27,27,27)'/><stop offset='0.252' stop-color='rgb(22,22,22)'/><stop offset='0.361' stop-color='rgb(15,15,15)'/><stop offset='0.509' stop-color='rgb(19,19,19)'/><stop offset='0.638' stop-color='rgb(36,36,36)'/><stop offset='0.681' stop-color='rgb(17,17,17)'/><stop offset='0.804' stop-color='rgb(24,24,24)'/><stop offset='0.809' stop-color='rgb(26,26,26)'/><stop offset='0.854' stop-color='rgb(23,23,23)'/><stop offset='0.860' stop-color='rgb(25,25,25)'/><stop offset='1.000' stop-color='rgb(11,11,11)'/><stop offset='1.000' stop-color='rgb(18,18,18)'/></linearGradient><linearGradient id='br2_1' x1='0' x2='1' y1='0' y2='0'><stop offset='0.000' stop-color='rgb(22,22,22)'/><stop offset='0.250' stop-color='rgb(32,32,32)'/><stop offset='0.279' stop-color='rgb(37,37,37)'/><stop offset='0.303' stop-color='rgb(28,28,28)'/><stop offset='0.351' stop-color='rgb(46,46,46)'/><stop offset='0.455' stop-color='rgb(49,49,49)'/><stop offset='0.457' stop-color='rgb(48,48,48)'/><stop offset='0.480' stop-color='rgb(25,25,25)'/><stop offset='0.498' stop-color='rgb(23,23,23)'/><stop offset='0.515' stop-color='rgb(44,44,44)'/><stop offset='0.558' stop-color='rgb(69,69,69)'/><stop offset='0.616' stop-color='rgb(28,28,28)'/><stop offset='0.659' stop-color='rgb(70,70,70)'/><stop offset='0.662' stop-color='rgb(45,45,45)'/><stop offset='0.726' stop-color='rgb(18,18,18)'/><stop offset='0.773' stop-color='rgb(33,33,33)'/><stop offset='0.796' stop-color='rgb(27,27,27)'/><stop offset='0.799' stop-color='rgb(16,16,16)'/><stop offset='0.815' stop-color='rgb(35,35,35)'/><stop offset='0.835' stop-color='rgb(35,35,35)'/><stop offset='0.877' stop-color='rgb(36,36,36)'/><stop offset='0.903' stop-color='rgb(25,25,25)'/><stop offset='0.941' stop-color='rgb(17,17,17)'/><stop offset='1.000' stop-color='rgb(12,12,12)'/></linearGradient><linearGradient id='br2_2' x1='0' x2='1' y1='0' y2='0'><stop offset='0.000' stop-color='rgb(12,12,12)'/><stop offset='0.031' stop-color='rgb(18,18,18)'/><stop offset='0.102' stop-color='rgb(24,24,24)'/><stop offset='0.113' stop-color='rgb(20,20,20)'/><stop offset='0.128' stop-color='rgb(12,12,12)'/><stop offset='0.144' stop-color='rgb(14,14,14)'/><stop offset='0.226' stop-color='rgb(36,36,36)'/><stop offset='0.316' stop-color='rgb(18,18,18)'/><stop offset='0.337' stop-color='rgb(23,23,23)'/><stop offset='0.393' stop-color='rgb(20,20,20)'/><stop offset='0.448' stop-color='rgb(30,30,30)'/><stop offset='0.449' stop-color='rgb(32,32,32)'/><stop offset='0.473' stop-color='rgb(34,34,34)'/><stop offset='0.515' stop-color='rgb(25,25,25)'/><stop offset='0.585' stop-color='rgb(41,41,41)'/><stop offset='0.661' stop-color='rgb(24,24,24)'/><stop offset='0.705' stop-color='rgb(42,42,42)'/><stop offset='0.740' stop-color='rgb(13,13,13)'/><stop offset='0.742' stop-color='rgb(21,21,21)'/><stop offset='0.756' stop-color='rgb(19,19,19)'/><stop offset='0.766' stop-color='rgb(25,25,25)'/><stop offset='0.862' stop-color='rgb(23,23,23)'/><stop offset='0.875' stop-color='rgb(10,10,10)'/><stop offset='0.902' stop-color='rgb(23,23,23)'/><stop offset='0.960' stop-color='rgb(17,17,17)'/><stop offset='1.000' stop-color='rgb(18,18,18)'/></linearGradient><linearGradient id='br2_3' x1='0' x2='1' y1='0' y2='0'><stop offset='0.000' stop-color='rgb(20,20,20)'/><stop offset='0.016' stop-color='rgb(24,24,24)'/><stop offset='0.019' stop-color='rgb(15,15,15)'/><stop offset='0.101' stop-color='rgb(16,16,16)'/><stop offset='0.290' stop-color='rgb(20,20,20)'/><stop offset='0.306' stop-color='rgb(18,18,18)'/><stop offset='0.372' stop-color='rgb(53,53,53)'/><stop offset='0.451' stop-color='rgb(27,27,27)'/><stop offset='0.519' stop-color='rgb(38,38,38)'/><stop offset='0.611' stop-color='rgb(33,33,33)'/><stop offset='0.673' stop-color='rgb(25,25,25)'/><stop offset='0.685' stop-color='rgb(18,18,18)'/><stop offset='0.841' stop-color='rgb(31,31,31)'/><stop offset='0.921' stop-color='rgb(23,23,23)'/><stop offset='0.984' stop-color='rgb(38,38,38)'/><stop offset='1.000' stop-color='rgb(16,16,16)'/></linearGradient><linearGradient id='br2_4' x1='0' x2='1' y1='0' y2='0'><stop offset='0.000' stop-color='rgb(6,6,6)'/><stop offset='0.071' stop-color='rgb(7,7,7)'/><stop offset='0.084' stop-color='rgb(11,11,11)'/><stop offset='0.156' stop-color='rgb(16,16,16)'/><stop offset='0.176' stop-color='rgb(11,11,11)'/><stop offset='0.395' stop-color='rgb(28,28,28)'/><stop offset='0.419' stop-color='rgb(16,16,16)'/><stop offset='0.492' stop-color='rgb(13,13,13)'/><stop offset='0.545' stop-color='rgb(15,15,15)'/><stop offset='0.549' stop-color='rgb(15,15,15)'/><stop offset='0.576' stop-color='rgb(20,20,20)'/><stop offset='0.597' stop-color='rgb(11,11,11)'/><stop offset='0.680' stop-color='rgb(8,8,8)'/><stop offset='0.696' stop-color='rgb(18,18,18)'/><stop offset='0.699' stop-color='rgb(14,14,14)'/><stop offset='0.720' stop-color='rgb(12,12,12)'/><stop offset='0.728' stop-color='rgb(18,18,18)'/><stop offset='0.728' stop-color='rgb(12,12,12)'/><stop offset='0.799' stop-color='rgb(10,10,10)'/><stop offset='0.806' stop-color='rgb(13,13,13)'/><stop offset='0.898' stop-color='rgb(13,13,13)'/><stop offset='0.911' stop-color='rgb(11,11,11)'/><stop offset='1.000' stop-color='rgb(10,10,10)'/></linearGradient><linearGradient id='br2_5' x1='0' x2='1' y1='0' y2='0'><stop offset='0.000' stop-color='rgb(22,22,22)'/><stop offset='0.008' stop-color='rgb(16,16,16)'/><stop offset='0.094' stop-color='rgb(22,22,22)'/><stop offset='0.177' stop-color='rgb(25,25,25)'/><stop offset='0.215' stop-color='rgb(31,31,31)'/><stop offset='0.217' stop-color='rgb(27,27,27)'/><stop offset='0.274' stop-color='rgb(26,26,26)'/><stop offset='0.313' stop-color='rgb(49,49,49)'/><stop offset='0.386' stop-color='rgb(22,22,22)'/><stop offset='0.390' stop-color='rgb(26,26,26)'/><stop offset='0.403' stop-color='rgb(45,45,45)'/><stop offset='0.466' stop-color='rgb(44,44,44)'/><stop offset='0.482' stop-color='rgb(75,75,75)'/><stop offset='0.490' stop-color='rgb(27,27,27)'/><stop offset='0.524' stop-color='rgb(37,37,37)'/><stop offset='0.558' stop-color='rgb(21,21,21)'/><stop offset='0.569' stop-color='rgb(52,52,52)'/><stop offset='0.580' stop-color='rgb(38,38,38)'/><stop offset='0.612' stop-color='rgb(34,34,34)'/><stop offset='0.679' stop-color='rgb(27,27,27)'/><stop offset='0.802' stop-color='rgb(26,26,26)'/><stop offset='0.907' stop-color='rgb(47,47,47)'/><stop offset='0.915' stop-color='rgb(29,29,29)'/><stop offset='0.921' stop-color='rgb(26,26,26)'/><stop offset='0.973' stop-color='rgb(25,25,25)'/><stop offset='1.000' stop-color='rgb(41,41,41)'/></linearGradient><linearGradient id='br2_6' x1='0' x2='1' y1='0' y2='0'><stop offset='0.000' stop-color='rgb(17,17,17)'/><stop offset='0.041' stop-color='rgb(8,8,8)'/><stop offset='0.061' stop-color='rgb(9,9,9)'/><stop offset='0.089' stop-color='rgb(12,12,12)'/><stop offset='0.112' stop-color='rgb(17,17,17)'/><stop offset='0.134' stop-color='rgb(18,18,18)'/><stop offset='0.150' stop-color='rgb(13,13,13)'/><stop offset='0.211' stop-color='rgb(14,14,14)'/><stop offset='0.214' stop-color='rgb(22,22,22)'/><stop offset='0.335' stop-color='rgb(22,22,22)'/><stop offset='0.356' stop-color='rgb(24,24,24)'/><stop offset='0.363' stop-color='rgb(26,26,26)'/><stop offset='0.461' stop-color='rgb(27,27,27)'/><stop offset='0.498' stop-color='rgb(18,18,18)'/><stop offset='0.505' stop-color='rgb(25,25,25)'/><stop offset='0.523' stop-color='rgb(20,20,20)'/><stop offset='0.561' stop-color='rgb(30,30,30)'/><stop offset='0.596' stop-color='rgb(20,20,20)'/><stop offset='0.675' stop-color='rgb(14,14,14)'/><stop offset='0.718' stop-color='rgb(18,18,18)'/><stop offset='0.787' stop-color='rgb(14,14,14)'/><stop offset='0.848' stop-color='rgb(20,20,20)'/><stop offset='0.857' stop-color='rgb(17,17,17)'/><stop offset='0.869' stop-color='rgb(14,14,14)'/><stop offset='0.950' stop-color='rgb(16,16,16)'/><stop offset='1.000' stop-color='rgb(10,10,10)'/></linearGradient><linearGradient id='br2_7' x1='0' x2='1' y1='0' y2='0'><stop offset='0.000' stop-color='rgb(13,13,13)'/><stop offset='0.047' stop-color='rgb(12,12,12)'/><stop offset='0.089' stop-color='rgb(11,11,11)'/><stop offset='0.141' stop-color='rgb(9,9,9)'/><stop offset='0.188' stop-color='rgb(18,18,18)'/><stop offset='0.202' stop-color='rgb(18,18,18)'/><stop offset='0.331' stop-color='rgb(24,24,24)'/><stop offset='0.360' stop-color='rgb(26,26,26)'/><stop offset='0.360' stop-color='rgb(33,33,33)'/><stop offset='0.498' stop-color='rgb(22,22,22)'/><stop offset='0.611' stop-color='rgb(21,21,21)'/><stop offset='0.648' stop-color='rgb(23,23,23)'/><stop offset='0.707' stop-color='rgb(16,16,16)'/><stop offset='0.728' stop-color='rgb(23,23,23)'/><stop offset='0.784' stop-color='rgb(26,26,26)'/><stop offset='0.940' stop-color='rgb(18,18,18)'/><stop offset='0.971' stop-color='rgb(9,9,9)'/><stop offset='1.000' stop-color='rgb(12,12,12)'/></linearGradient><linearGradient id='br2_8' x1='0' x2='1' y1='0' y2='0'><stop offset='0.000' stop-color='rgb(18,18,18)'/><stop offset='0.050' stop-color='rgb(17,17,17)'/><stop offset='0.060' stop-color='rgb(12,12,12)'/><stop offset='0.092' stop-color='rgb(18,18,18)'/><stop offset='0.106' stop-color='rgb(29,29,29)'/><stop offset='0.139' stop-color='rgb(27,27,27)'/><stop offset='0.147' stop-color='rgb(28,28,28)'/><stop offset='0.173' stop-color='rgb(35,35,35)'/><stop offset='0.200' stop-color='rgb(33,33,33)'/><stop offset='0.242' stop-color='rgb(29,29,29)'/><stop offset='0.351' stop-color='rgb(24,24,24)'/><stop offset='0.481' stop-color='rgb(27,27,27)'/><stop offset='0.502' stop-color='rgb(49,49,49)'/><stop offset='0.559' stop-color='rgb(25,25,25)'/><stop offset='0.649' stop-color='rgb(42,42,42)'/><stop offset='0.670' stop-color='rgb(21,21,21)'/><stop offset='0.899' stop-color='rgb(24,24,24)'/><stop offset='0.919' stop-color='rgb(18,18,18)'/><stop offset='0.972' stop-color='rgb(15,15,15)'/><stop offset='1.000' stop-color='rgb(14,14,14)'/></linearGradient><linearGradient id='br2_9' x1='0' x2='1' y1='0' y2='0'><stop offset='0.000' stop-color='rgb(23,23,23)'/><stop offset='0.024' stop-color='rgb(14,14,14)'/><stop offset='0.039' stop-color='rgb(14,14,14)'/><stop offset='0.138' stop-color='rgb(10,10,10)'/><stop offset='0.140' stop-color='rgb(18,18,18)'/><stop offset='0.144' stop-color='rgb(22,22,22)'/><stop offset='0.212' stop-color='rgb(21,21,21)'/><stop offset='0.225' stop-color='rgb(9,9,9)'/><stop offset='0.263' stop-color='rgb(23,23,23)'/><stop offset='0.313' stop-color='rgb(22,22,22)'/><stop offset='0.391' stop-color='rgb(12,12,12)'/><stop offset='0.540' stop-color='rgb(17,17,17)'/><stop offset='0.689' stop-color='rgb(20,20,20)'/><stop offset='0.694' stop-color='rgb(25,25,25)'/><stop offset='0.722' stop-color='rgb(12,12,12)'/><stop offset='0.737' stop-color='rgb(23,23,23)'/><stop offset='0.861' stop-color='rgb(20,20,20)'/><stop offset='0.997' stop-color='rgb(14,14,14)'/><stop offset='1.000' stop-color='rgb(13,13,13)'/></linearGradient><linearGradient id='br2_10' x1='0' x2='1' y1='0' y2='0'><stop offset='0.000' stop-color='rgb(30,30,30)'/><stop offset='0.029' stop-color='rgb(15,15,15)'/><stop offset='0.059' stop-color='rgb(13,13,13)'/><stop offset='0.071' stop-color='rgb(12,12,12)'/><stop offset='0.098' stop-color='rgb(21,21,21)'/><stop offset='0.128' stop-color='rgb(20,20,20)'/><stop offset='0.338' stop-color='rgb(30,30,30)'/><stop offset='0.369' stop-color='rgb(25,25,25)'/><stop offset='0.471' stop-color='rgb(21,21,21)'/><stop offset='0.533' stop-color='rgb(36,36,36)'/><stop offset='0.535' stop-color='rgb(21,21,21)'/><stop offset='0.577' stop-color='rgb(37,37,37)'/><stop offset='0.626' stop-color='rgb(28,28,28)'/><stop offset='0.654' stop-color='rgb(23,23,23)'/><stop offset='0.769' stop-color='rgb(22,22,22)'/><stop offset='0.789' stop-color='rgb(16,16,16)'/><stop offset='0.792' stop-color='rgb(24,24,24)'/><stop offset='0.823' stop-color='rgb(13,13,13)'/><stop offset='0.850' stop-color='rgb(16,16,16)'/><stop offset='0.869' stop-color='rgb(14,14,14)'/><stop offset='0.934' stop-color='rgb(10,10,10)'/><stop offset='0.991' stop-color='rgb(21,21,21)'/><stop offset='1.000' stop-color='rgb(24,24,24)'/></linearGradient><linearGradient id='br2_11' x1='0' x2='1' y1='0' y2='0'><stop offset='0.000' stop-color='rgb(10,10,10)'/><stop offset='0.025' stop-color='rgb(16,16,16)'/><stop offset='0.101' stop-color='rgb(17,17,17)'/><stop offset='0.129' stop-color='rgb(10,10,10)'/><stop offset='0.142' stop-color='rgb(6,6,6)'/><stop offset='0.221' stop-color='rgb(14,14,14)'/><stop offset='0.322' stop-color='rgb(9,9,9)'/><stop offset='0.402' stop-color='rgb(17,17,17)'/><stop offset='0.479' stop-color='rgb(20,20,20)'/><stop offset='0.510' stop-color='rgb(13,13,13)'/><stop offset='0.515' stop-color='rgb(13,13,13)'/><stop offset='0.520' stop-color='rgb(17,17,17)'/><stop offset='0.538' stop-color='rgb(15,15,15)'/><stop offset='0.581' stop-color='rgb(13,13,13)'/><stop offset='0.616' stop-color='rgb(23,23,23)'/><stop offset='0.646' stop-color='rgb(17,17,17)'/><stop offset='0.705' stop-color='rgb(13,13,13)'/><stop offset='0.707' stop-color='rgb(12,12,12)'/><stop offset='0.735' stop-color='rgb(9,9,9)'/><stop offset='0.782' stop-color='rgb(7,7,7)'/><stop offset='0.943' stop-color='rgb(11,11,11)'/><stop offset='1.000' stop-color='rgb(10,10,10)'/></linearGradient><linearGradient id='br2_12' x1='0' x2='1' y1='0' y2='0'><stop offset='0.000' stop-color='rgb(36,36,36)'/><stop offset='0.063' stop-color='rgb(23,23,23)'/><stop offset='0.080' stop-color='rgb(21,21,21)'/><stop offset='0.103' stop-color='rgb(16,16,16)'/><stop offset='0.220' stop-color='rgb(27,27,27)'/><stop offset='0.243' stop-color='rgb(41,41,41)'/><stop offset='0.360' stop-color='rgb(35,35,35)'/><stop offset='0.550' stop-color='rgb(35,35,35)'/><stop offset='0.566' stop-color='rgb(47,47,47)'/><stop offset='0.692' stop-color='rgb(22,22,22)'/><stop offset='0.853' stop-color='rgb(17,17,17)'/><stop offset='0.913' stop-color='rgb(13,13,13)'/><stop offset='0.929' stop-color='rgb(32,32,32)'/><stop offset='0.934' stop-color='rgb(24,24,24)'/><stop offset='0.968' stop-color='rgb(21,21,21)'/><stop offset='1.000' stop-color='rgb(20,20,20)'/></linearGradient><linearGradient id='br2_13' x1='0' x2='1' y1='0' y2='0'><stop offset='0.000' stop-color='rgb(13,13,13)'/><stop offset='0.024' stop-color='rgb(12,12,12)'/><stop offset='0.031' stop-color='rgb(15,15,15)'/><stop offset='0.262' stop-color='rgb(17,17,17)'/><stop offset='0.271' stop-color='rgb(21,21,21)'/><stop offset='0.353' stop-color='rgb(42,42,42)'/><stop offset='0.395' stop-color='rgb(23,23,23)'/><stop offset='0.427' stop-color='rgb(20,20,20)'/><stop offset='0.457' stop-color='rgb(31,31,31)'/><stop offset='0.466' stop-color='rgb(24,24,24)'/><stop offset='0.477' stop-color='rgb(26,26,26)'/><stop offset='0.522' stop-color='rgb(28,28,28)'/><stop offset='0.619' stop-color='rgb(14,14,14)'/><stop offset='0.632' stop-color='rgb(23,23,23)'/><stop offset='0.836' stop-color='rgb(15,15,15)'/><stop offset='0.907' stop-color='rgb(17,17,17)'/><stop offset='0.910' stop-color='rgb(18,18,18)'/><stop offset='0.931' stop-color='rgb(12,12,12)'/><stop offset='1.000' stop-color='rgb(15,15,15)'/></linearGradient><linearGradient id='br2_14' x1='0' x2='1' y1='0' y2='0'><stop offset='0.000' stop-color='rgb(18,18,18)'/><stop offset='0.009' stop-color='rgb(26,26,26)'/><stop offset='0.011' stop-color='rgb(20,20,20)'/><stop offset='0.012' stop-color='rgb(14,14,14)'/><stop offset='0.101' stop-color='rgb(14,14,14)'/><stop offset='0.140' stop-color='rgb(27,27,27)'/><stop offset='0.206' stop-color='rgb(27,27,27)'/><stop offset='0.235' stop-color='rgb(19,19,19)'/><stop offset='0.303' stop-color='rgb(29,29,29)'/><stop offset='0.314' stop-color='rgb(36,36,36)'/><stop offset='0.317' stop-color='rgb(20,20,20)'/><stop offset='0.323' stop-color='rgb(35,35,35)'/><stop offset='0.345' stop-color='rgb(22,22,22)'/><stop offset='0.406' stop-color='rgb(24,24,24)'/><stop offset='0.480' stop-color='rgb(35,35,35)'/><stop offset='0.527' stop-color='rgb(23,23,23)'/><stop offset='0.592' stop-color='rgb(30,30,30)'/><stop offset='0.603' stop-color='rgb(22,22,22)'/><stop offset='0.620' stop-color='rgb(35,35,35)'/><stop offset='0.707' stop-color='rgb(34,34,34)'/><stop offset='0.748' stop-color='rgb(47,47,47)'/><stop offset='0.783' stop-color='rgb(17,17,17)'/><stop offset='0.837' stop-color='rgb(18,18,18)'/><stop offset='0.885' stop-color='rgb(25,25,25)'/><stop offset='0.925' stop-color='rgb(14,14,14)'/><stop offset='1.000' stop-color='rgb(35,35,35)'/></linearGradient><linearGradient id='br2_15' x1='0' x2='1' y1='0' y2='0'><stop offset='0.000' stop-color='rgb(25,25,25)'/><stop offset='0.063' stop-color='rgb(30,30,30)'/><stop offset='0.075' stop-color='rgb(36,36,36)'/><stop offset='0.122' stop-color='rgb(32,32,32)'/><stop offset='0.148' stop-color='rgb(20,20,20)'/><stop offset='0.176' stop-color='rgb(34,34,34)'/><stop offset='0.305' stop-color='rgb(46,46,46)'/><stop offset='0.454' stop-color='rgb(54,54,54)'/><stop offset='0.473' stop-color='rgb(33,33,33)'/><stop offset='0.484' stop-color='rgb(67,67,67)'/><stop offset='0.571' stop-color='rgb(27,27,27)'/><stop offset='0.805' stop-color='rgb(20,20,20)'/><stop offset='0.808' stop-color='rgb(21,21,21)'/><stop offset='0.879' stop-color='rgb(15,15,15)'/><stop offset='0.958' stop-color='rgb(29,29,29)'/><stop offset='0.960' stop-color='rgb(39,39,39)'/><stop offset='1.000' stop-color='rgb(14,14,14)'/></linearGradient><linearGradient id='br2_16' x1='0' x2='1' y1='0' y2='0'><stop offset='0.000' stop-color='rgb(12,12,12)'/><stop offset='0.048' stop-color='rgb(8,8,8)'/><stop offset='0.074' stop-color='rgb(7,7,7)'/><stop offset='0.150' stop-color='rgb(11,11,11)'/><stop offset='0.151' stop-color='rgb(16,16,16)'/><stop offset='0.297' stop-color='rgb(18,18,18)'/><stop offset='0.310' stop-color='rgb(17,17,17)'/><stop offset='0.340' stop-color='rgb(18,18,18)'/><stop offset='0.358' stop-color='rgb(11,11,11)'/><stop offset='0.417' stop-color='rgb(14,14,14)'/><stop offset='0.493' stop-color='rgb(21,21,21)'/><stop offset='0.544' stop-color='rgb(22,22,22)'/><stop offset='0.663' stop-color='rgb(12,12,12)'/><stop offset='0.739' stop-color='rgb(18,18,18)'/><stop offset='0.752' stop-color='rgb(7,7,7)'/><stop offset='0.761' stop-color='rgb(11,11,11)'/><stop offset='0.891' stop-color='rgb(12,12,12)'/><stop offset='0.972' stop-color='rgb(7,7,7)'/><stop offset='1.000' stop-color='rgb(18,18,18)'/></linearGradient><linearGradient id='br2_17' x1='0' x2='1' y1='0' y2='0'><stop offset='0.000' stop-color='rgb(11,11,11)'/><stop offset='0.107' stop-color='rgb(15,15,15)'/><stop offset='0.140' stop-color='rgb(20,20,20)'/><stop offset='0.177' stop-color='rgb(13,13,13)'/><stop offset='0.227' stop-color='rgb(9,9,9)'/><stop offset='0.232' stop-color='rgb(12,12,12)'/><stop offset='0.238' stop-color='rgb(21,21,21)'/><stop offset='0.259' stop-color='rgb(12,12,12)'/><stop offset='0.314' stop-color='rgb(24,24,24)'/><stop offset='0.338' stop-color='rgb(27,27,27)'/><stop offset='0.344' stop-color='rgb(16,16,16)'/><stop offset='0.394' stop-color='rgb(21,21,21)'/><stop offset='0.406' stop-color='rgb(19,19,19)'/><stop offset='0.455' stop-color='rgb(20,20,20)'/><stop offset='0.503' stop-color='rgb(20,20,20)'/><stop offset='0.537' stop-color='rgb(21,21,21)'/><stop offset='0.555' stop-color='rgb(25,25,25)'/><stop offset='0.563' stop-color='rgb(23,23,23)'/><stop offset='0.621' stop-color='rgb(19,19,19)'/><stop offset='0.662' stop-color='rgb(23,23,23)'/><stop offset='0.710' stop-color='rgb(23,23,23)'/><stop offset='0.721' stop-color='rgb(18,18,18)'/><stop offset='0.747' stop-color='rgb(24,24,24)'/><stop offset='0.960' stop-color='rgb(8,8,8)'/><stop offset='1.000' stop-color='rgb(14,14,14)'/></linearGradient><linearGradient id='br2_18' x1='0' x2='1' y1='0' y2='0'><stop offset='0.000' stop-color='rgb(30,30,30)'/><stop offset='0.043' stop-color='rgb(30,30,30)'/><stop offset='0.070' stop-color='rgb(25,25,25)'/><stop offset='0.141' stop-color='rgb(28,28,28)'/><stop offset='0.163' stop-color='rgb(25,25,25)'/><stop offset='0.220' stop-color='rgb(17,17,17)'/><stop offset='0.303' stop-color='rgb(33,33,33)'/><stop offset='0.508' stop-color='rgb(46,46,46)'/><stop offset='0.515' stop-color='rgb(23,23,23)'/><stop offset='0.546' stop-color='rgb(36,36,36)'/><stop offset='0.562' stop-color='rgb(29,29,29)'/><stop offset='0.679' stop-color='rgb(26,26,26)'/><stop offset='0.727' stop-color='rgb(24,24,24)'/><stop offset='0.737' stop-color='rgb(17,17,17)'/><stop offset='0.787' stop-color='rgb(20,20,20)'/><stop offset='0.792' stop-color='rgb(27,27,27)'/><stop offset='0.814' stop-color='rgb(56,56,56)'/><stop offset='0.889' stop-color='rgb(33,33,33)'/><stop offset='0.892' stop-color='rgb(14,14,14)'/><stop offset='0.896' stop-color='rgb(14,14,14)'/><stop offset='0.898' stop-color='rgb(24,24,24)'/><stop offset='0.935' stop-color='rgb(17,17,17)'/><stop offset='0.997' stop-color='rgb(23,23,23)'/><stop offset='1.000' stop-color='rgb(20,20,20)'/></linearGradient><linearGradient id='br2_19' x1='0' x2='1' y1='0' y2='0'><stop offset='0.000' stop-color='rgb(25,25,25)'/><stop offset='0.009' stop-color='rgb(13,13,13)'/><stop offset='0.020' stop-color='rgb(17,17,17)'/><stop offset='0.023' stop-color='rgb(16,16,16)'/><stop offset='0.077' stop-color='rgb(26,26,26)'/><stop offset='0.120' stop-color='rgb(48,48,48)'/><stop offset='0.155' stop-color='rgb(35,35,35)'/><stop offset='0.163' stop-color='rgb(28,28,28)'/><stop offset='0.187' stop-color='rgb(31,31,31)'/><stop offset='0.218' stop-color='rgb(31,31,31)'/><stop offset='0.275' stop-color='rgb(38,38,38)'/><stop offset='0.295' stop-color='rgb(20,20,20)'/><stop offset='0.330' stop-color='rgb(24,24,24)'/><stop offset='0.350' stop-color='rgb(41,41,41)'/><stop offset='0.387' stop-color='rgb(46,46,46)'/><stop offset='0.527' stop-color='rgb(43,43,43)'/><stop offset='0.530' stop-color='rgb(47,47,47)'/><stop offset='0.635' stop-color='rgb(75,75,75)'/><stop offset='0.643' stop-color='rgb(43,43,43)'/><stop offset='0.688' stop-color='rgb(31,31,31)'/><stop offset='0.830' stop-color='rgb(28,28,28)'/><stop offset='0.840' stop-color='rgb(35,35,35)'/><stop offset='0.904' stop-color='rgb(33,33,33)'/><stop offset='0.959' stop-color='rgb(37,37,37)'/><stop offset='1.000' stop-color='rgb(22,22,22)'/></linearGradient><linearGradient id='br2_20' x1='0' x2='1' y1='0' y2='0'><stop offset='0.000' stop-color='rgb(11,11,11)'/><stop offset='0.030' stop-color='rgb(5,5,5)'/><stop offset='0.065' stop-color='rgb(6,6,6)'/><stop offset='0.081' stop-color='rgb(10,10,10)'/><stop offset='0.104' stop-color='rgb(11,11,11)'/><stop offset='0.135' stop-color='rgb(6,6,6)'/><stop offset='0.143' stop-color='rgb(10,10,10)'/><stop offset='0.247' stop-color='rgb(11,11,11)'/><stop offset='0.259' stop-color='rgb(7,7,7)'/><stop offset='0.341' stop-color='rgb(12,12,12)'/><stop offset='0.376' stop-color='rgb(20,20,20)'/><stop offset='0.437' stop-color='rgb(12,12,12)'/><stop offset='0.479' stop-color='rgb(13,13,13)'/><stop offset='0.523' stop-color='rgb(33,33,33)'/><stop offset='0.635' stop-color='rgb(21,21,21)'/><stop offset='0.805' stop-color='rgb(12,12,12)'/><stop offset='0.923' stop-color='rgb(10,10,10)'/><stop offset='0.941' stop-color='rgb(13,13,13)'/><stop offset='1.000' stop-color='rgb(10,10,10)'/></linearGradient><linearGradient id='br2_21' x1='0' x2='1' y1='0' y2='0'><stop offset='0.000' stop-color='rgb(14,14,14)'/><stop offset='0.072' stop-color='rgb(14,14,14)'/><stop offset='0.168' stop-color='rgb(14,14,14)'/><stop offset='0.194' stop-color='rgb(30,30,30)'/><stop offset='0.273' stop-color='rgb(24,24,24)'/><stop offset='0.279' stop-color='rgb(25,25,25)'/><stop offset='0.332' stop-color='rgb(39,39,39)'/><stop offset='0.423' stop-color='rgb(24,24,24)'/><stop offset='0.468' stop-color='rgb(34,34,34)'/><stop offset='0.586' stop-color='rgb(42,42,42)'/><stop offset='0.623' stop-color='rgb(38,38,38)'/><stop offset='0.644' stop-color='rgb(23,23,23)'/><stop offset='0.759' stop-color='rgb(20,20,20)'/><stop offset='0.818' stop-color='rgb(20,20,20)'/><stop offset='0.841' stop-color='rgb(24,24,24)'/><stop offset='0.844' stop-color='rgb(26,26,26)'/><stop offset='0.852' stop-color='rgb(24,24,24)'/><stop offset='0.865' stop-color='rgb(12,12,12)'/><stop offset='0.873' stop-color='rgb(14,14,14)'/><stop offset='0.893' stop-color='rgb(32,32,32)'/><stop offset='0.970' stop-color='rgb(21,21,21)'/><stop offset='0.993' stop-color='rgb(11,11,11)'/><stop offset='1.000' stop-color='rgb(11,11,11)'/></linearGradient><linearGradient id='br2_22' x1='0' x2='1' y1='0' y2='0'><stop offset='0.000' stop-color='rgb(17,17,17)'/><stop offset='0.058' stop-color='rgb(11,11,11)'/><stop offset='0.157' stop-color='rgb(28,28,28)'/><stop offset='0.164' stop-color='rgb(30,30,30)'/><stop offset='0.225' stop-color='rgb(22,22,22)'/><stop offset='0.245' stop-color='rgb(25,25,25)'/><stop offset='0.418' stop-color='rgb(33,33,33)'/><stop offset='0.538' stop-color='rgb(44,44,44)'/><stop offset='0.610' stop-color='rgb(40,40,40)'/><stop offset='0.631' stop-color='rgb(17,17,17)'/><stop offset='0.674' stop-color='rgb(17,17,17)'/><stop offset='0.685' stop-color='rgb(22,22,22)'/><stop offset='0.705' stop-color='rgb(22,22,22)'/><stop offset='0.770' stop-color='rgb(38,38,38)'/><stop offset='0.813' stop-color='rgb(35,35,35)'/><stop offset='0.836' stop-color='rgb(29,29,29)'/><stop offset='0.881' stop-color='rgb(17,17,17)'/><stop offset='0.993' stop-color='rgb(24,24,24)'/><stop offset='0.998' stop-color='rgb(11,11,11)'/><stop offset='1.000' stop-color='rgb(10,10,10)'/></linearGradient><linearGradient id='br2_23' x1='0' x2='1' y1='0' y2='0'><stop offset='0.000' stop-color='rgb(25,25,25)'/><stop offset='0.004' stop-color='rgb(17,17,17)'/><stop offset='0.246' stop-color='rgb(23,23,23)'/><stop offset='0.262' stop-color='rgb(21,21,21)'/><stop offset='0.322' stop-color='rgb(40,40,40)'/><stop offset='0.330' stop-color='rgb(24,24,24)'/><stop offset='0.342' stop-color='rgb(37,37,37)'/><stop offset='0.417' stop-color='rgb(32,32,32)'/><stop offset='0.465' stop-color='rgb(65,65,65)'/><stop offset='0.530' stop-color='rgb(28,28,28)'/><stop offset='0.594' stop-color='rgb(22,22,22)'/><stop offset='0.605' stop-color='rgb(21,21,21)'/><stop offset='0.680' stop-color='rgb(28,28,28)'/><stop offset='0.705' stop-color='rgb(27,27,27)'/><stop offset='0.721' stop-color='rgb(22,22,22)'/><stop offset='0.738' stop-color='rgb(34,34,34)'/><stop offset='0.749' stop-color='rgb(47,47,47)'/><stop offset='0.785' stop-color='rgb(15,15,15)'/><stop offset='0.811' stop-color='rgb(15,15,15)'/><stop offset='0.848' stop-color='rgb(21,21,21)'/><stop offset='0.920' stop-color='rgb(21,21,21)'/><stop offset='1.000' stop-color='rgb(16,16,16)'/></linearGradient><linearGradient id='br2_24' x1='0' x2='1' y1='0' y2='0'><stop offset='0.000' stop-color='rgb(16,16,16)'/><stop offset='0.033' stop-color='rgb(13,13,13)'/><stop offset='0.083' stop-color='rgb(18,18,18)'/><stop offset='0.173' stop-color='rgb(11,11,11)'/><stop offset='0.292' stop-color='rgb(13,13,13)'/><stop offset='0.312' stop-color='rgb(16,16,16)'/><stop offset='0.360' stop-color='rgb(14,14,14)'/><stop offset='0.421' stop-color='rgb(18,18,18)'/><stop offset='0.424' stop-color='rgb(21,21,21)'/><stop offset='0.483' stop-color='rgb(17,17,17)'/><stop offset='0.547' stop-color='rgb(29,29,29)'/><stop offset='0.606' stop-color='rgb(15,15,15)'/><stop offset='0.676' stop-color='rgb(11,11,11)'/><stop offset='0.714' stop-color='rgb(23,23,23)'/><stop offset='0.748' stop-color='rgb(13,13,13)'/><stop offset='0.831' stop-color='rgb(17,17,17)'/><stop offset='0.919' stop-color='rgb(13,13,13)'/><stop offset='0.966' stop-color='rgb(10,10,10)'/><stop offset='0.989' stop-color='rgb(9,9,9)'/><stop offset='1.000' stop-color='rgb(14,14,14)'/></linearGradient><linearGradient id='br2_25' x1='0' x2='1' y1='0' y2='0'><stop offset='0.000' stop-color='rgb(16,16,16)'/><stop offset='0.050' stop-color='rgb(10,10,10)'/><stop offset='0.075' stop-color='rgb(13,13,13)'/><stop offset='0.094' stop-color='rgb(16,16,16)'/><stop offset='0.185' stop-color='rgb(21,21,21)'/><stop offset='0.196' stop-color='rgb(9,9,9)'/><stop offset='0.218' stop-color='rgb(16,16,16)'/><stop offset='0.225' stop-color='rgb(21,21,21)'/><stop offset='0.250' stop-color='rgb(17,17,17)'/><stop offset='0.265' stop-color='rgb(12,12,12)'/><stop offset='0.273' stop-color='rgb(20,20,20)'/><stop offset='0.298' stop-color='rgb(32,32,32)'/><stop offset='0.338' stop-color='rgb(24,24,24)'/><stop offset='0.342' stop-color='rgb(23,23,23)'/><stop offset='0.377' stop-color='rgb(27,27,27)'/><stop offset='0.501' stop-color='rgb(24,24,24)'/><stop offset='0.529' stop-color='rgb(23,23,23)'/><stop offset='0.634' stop-color='rgb(23,23,23)'/><stop offset='0.683' stop-color='rgb(16,16,16)'/><stop offset='0.806' stop-color='rgb(12,12,12)'/><stop offset='0.863' stop-color='rgb(8,8,8)'/><stop offset='0.920' stop-color='rgb(16,16,16)'/><stop offset='0.942' stop-color='rgb(13,13,13)'/><stop offset='0.968' stop-color='rgb(14,14,14)'/><stop offset='0.983' stop-color='rgb(13,13,13)'/><stop offset='1.000' stop-color='rgb(11,11,11)'/></linearGradient><linearGradient id='br2_26' x1='0' x2='1' y1='0' y2='0'><stop offset='0.000' stop-color='rgb(19,19,19)'/><stop offset='0.020' stop-color='rgb(11,11,11)'/><stop offset='0.051' stop-color='rgb(10,10,10)'/><stop offset='0.078' stop-color='rgb(9,9,9)'/><stop offset='0.167' stop-color='rgb(7,7,7)'/><stop offset='0.182' stop-color='rgb(7,7,7)'/><stop offset='0.268' stop-color='rgb(9,9,9)'/><stop offset='0.324' stop-color='rgb(14,14,14)'/><stop offset='0.342' stop-color='rgb(19,19,19)'/><stop offset='0.455' stop-color='rgb(18,18,18)'/><stop offset='0.465' stop-color='rgb(26,26,26)'/><stop offset='0.582' stop-color='rgb(24,24,24)'/><stop offset='0.584' stop-color='rgb(16,16,16)'/><stop offset='0.630' stop-color='rgb(11,11,11)'/><stop offset='0.672' stop-color='rgb(17,17,17)'/><stop offset='0.685' stop-color='rgb(16,16,16)'/><stop offset='0.786' stop-color='rgb(11,11,11)'/><stop offset='0.809' stop-color='rgb(16,16,16)'/><stop offset='0.862' stop-color='rgb(9,9,9)'/><stop offset='1.000' stop-color='rgb(10,10,10)'/></linearGradient><linearGradient id='br2_27' x1='0' x2='1' y1='0' y2='0'><stop offset='0.000' stop-color='rgb(20,20,20)'/><stop offset='0.047' stop-color='rgb(20,20,20)'/><stop offset='0.091' stop-color='rgb(31,31,31)'/><stop offset='0.173' stop-color='rgb(18,18,18)'/><stop offset='0.249' stop-color='rgb(22,22,22)'/><stop offset='0.251' stop-color='rgb(17,17,17)'/><stop offset='0.321' stop-color='rgb(30,30,30)'/><stop offset='0.322' stop-color='rgb(23,23,23)'/><stop offset='0.351' stop-color='rgb(63,63,63)'/><stop offset='0.373' stop-color='rgb(49,49,49)'/><stop offset='0.405' stop-color='rgb(45,45,45)'/><stop offset='0.475' stop-color='rgb(39,39,39)'/><stop offset='0.498' stop-color='rgb(28,28,28)'/><stop offset='0.662' stop-color='rgb(33,33,33)'/><stop offset='0.680' stop-color='rgb(38,38,38)'/><stop offset='0.696' stop-color='rgb(38,38,38)'/><stop offset='0.698' stop-color='rgb(33,33,33)'/><stop offset='0.702' stop-color='rgb(19,19,19)'/><stop offset='0.724' stop-color='rgb(23,23,23)'/><stop offset='0.935' stop-color='rgb(32,32,32)'/><stop offset='0.973' stop-color='rgb(25,25,25)'/><stop offset='0.973' stop-color='rgb(22,22,22)'/><stop offset='0.978' stop-color='rgb(25,25,25)'/><stop offset='1.000' stop-color='rgb(13,13,13)'/></linearGradient><linearGradient id='br2_28' x1='0' x2='1' y1='0' y2='0'><stop offset='0.000' stop-color='rgb(20,20,20)'/><stop offset='0.019' stop-color='rgb(18,18,18)'/><stop offset='0.026' stop-color='rgb(18,18,18)'/><stop offset='0.031' stop-color='rgb(28,28,28)'/><stop offset='0.071' stop-color='rgb(21,21,21)'/><stop offset='0.081' stop-color='rgb(29,29,29)'/><stop offset='0.103' stop-color='rgb(23,23,23)'/><stop offset='0.226' stop-color='rgb(35,35,35)'/><stop offset='0.227' stop-color='rgb(38,38,38)'/><stop offset='0.333' stop-color='rgb(37,37,37)'/><stop offset='0.433' stop-color='rgb(63,63,63)'/><stop offset='0.439' stop-color='rgb(44,44,44)'/><stop offset='0.464' stop-color='rgb(23,23,23)'/><stop offset='0.514' stop-color='rgb(80,80,80)'/><stop offset='0.603' stop-color='rgb(48,48,48)'/><stop offset='0.696' stop-color='rgb(33,33,33)'/><stop offset='0.781' stop-color='rgb(36,36,36)'/><stop offset='0.945' stop-color='rgb(22,22,22)'/><stop offset='1.000' stop-color='rgb(15,15,15)'/></linearGradient><linearGradient id='br2_29' x1='0' x2='1' y1='0' y2='0'><stop offset='0.000' stop-color='rgb(18,18,18)'/><stop offset='0.009' stop-color='rgb(12,12,12)'/><stop offset='0.012' stop-color='rgb(11,11,11)'/><stop offset='0.059' stop-color='rgb(31,31,31)'/><stop offset='0.074' stop-color='rgb(15,15,15)'/><stop offset='0.129' stop-color='rgb(25,25,25)'/><stop offset='0.253' stop-color='rgb(19,19,19)'/><stop offset='0.286' stop-color='rgb(32,32,32)'/><stop offset='0.289' stop-color='rgb(13,13,13)'/><stop offset='0.338' stop-color='rgb(15,15,15)'/><stop offset='0.343' stop-color='rgb(33,33,33)'/><stop offset='0.344' stop-color='rgb(44,44,44)'/><stop offset='0.363' stop-color='rgb(49,49,49)'/><stop offset='0.400' stop-color='rgb(24,24,24)'/><stop offset='0.475' stop-color='rgb(38,38,38)'/><stop offset='0.477' stop-color='rgb(37,37,37)'/><stop offset='0.566' stop-color='rgb(26,26,26)'/><stop offset='0.570' stop-color='rgb(36,36,36)'/><stop offset='0.672' stop-color='rgb(16,16,16)'/><stop offset='0.761' stop-color='rgb(27,27,27)'/><stop offset='0.833' stop-color='rgb(22,22,22)'/><stop offset='0.873' stop-color='rgb(21,21,21)'/><stop offset='0.920' stop-color='rgb(19,19,19)'/><stop offset='0.989' stop-color='rgb(22,22,22)'/><stop offset='1.000' stop-color='rgb(10,10,10)'/></linearGradient></defs><rect x='0' y='1119' width='1919' height='1' fill='url(#br2_0)'/><rect x='0' y='1120' width='1919' height='1' fill='url(#br2_1)'/><rect x='0' y='1121' width='1919' height='1' fill='url(#br2_2)'/><rect x='0' y='1122' width='1919' height='1' fill='url(#br2_3)'/><rect x='0' y='1123' width='1919' height='1' fill='url(#br2_4)'/><rect x='0' y='1124' width='1919' height='1' fill='url(#br2_5)'/><rect x='0' y='1125' width='1919' height='1' fill='url(#br2_6)'/><rect x='0' y='1126' width='1919' height='1' fill='url(#br2_7)'/><rect x='0' y='1127' width='1919' height='1' fill='url(#br2_8)'/><rect x='0' y='1128' width='1919' height='1' fill='url(#br2_9)'/><rect x='0' y='1129' width='1919' height='1' fill='url(#br2_10)'/><rect x='0' y='1130' width='1919' height='1' fill='url(#br2_11)'/><rect x='0' y='1131' width='1919' height='1' fill='url(#br2_12)'/><rect x='0' y='1132' width='1919' height='1' fill='url(#br2_13)'/><rect x='0' y='1133' width='1919' height='1' fill='url(#br2_14)'/><rect x='0' y='1134' width='1919' height='1' fill='url(#br2_15)'/><rect x='0' y='1135' width='1919' height='1' fill='url(#br2_16)'/><rect x='0' y='1136' width='1919' height='1' fill='url(#br2_17)'/><rect x='0' y='1137' width='1919' height='1' fill='url(#br2_18)'/><rect x='0' y='1138' width='1919' height='1' fill='url(#br2_19)'/><rect x='0' y='1139' width='1919' height='1' fill='url(#br2_20)'/><rect x='0' y='1140' width='1919' height='1' fill='url(#br2_21)'/><rect x='0' y='1141' width='1919' height='1' fill='url(#br2_22)'/><rect x='0' y='1142' width='1919' height='1' fill='url(#br2_23)'/><rect x='0' y='1143' width='1919' height='1' fill='url(#br2_24)'/><rect x='0' y='1144' width='1919' height='1' fill='url(#br2_25)'/><rect x='0' y='1145' width='1919' height='1' fill='url(#br2_26)'/><rect x='0' y='1146' width='1919' height='1' fill='url(#br2_27)'/><rect x='0' y='1147' width='1919' height='1' fill='url(#br2_28)'/><rect x='0' y='1148' width='1919' height='1' fill='url(#br2_29)'/></svg><span class='t' style='left:23.25px;top:1133px;font-size:11.26px;font-weight:700;color:#8a8a8a;font-style:normal;'>Design code:</span><span class='t' style='left:98.45px;top:1133px;font-size:11.37px;font-weight:700;color:#fff;font-style:normal;'>EN</span><span class='t' style='left:133.68px;top:1134px;font-size:10.42px;font-weight:700;color:#8a8a8a;font-style:normal;'>Analysis:</span><span class='t' style='left:184.55px;top:1133px;font-size:11.35px;font-weight:700;color:#fff;font-style:normal;'>Stress, strain</span><span class='t' style='left:275.83px;top:1132px;font-size:11.64px;font-weight:700;color:#8a8a8a;font-style:normal;'>Load effects:</span><span class='t' style='left:353.13px;top:1132px;font-size:11.72px;font-weight:700;color:#fff;font-style:normal;'>In equilibrium</span><span class='t' style='left:450.14px;top:1133px;font-size:11.40px;font-weight:700;color:#8a8a8a;font-style:normal;'>Units:</span><span class='t' style='left:489.91px;top:1132px;font-size:12.21px;font-weight:700;color:#fff;font-style:normal;'>mm</span><span class='t' style='left:1796.5px;top:1131.4px;font-size:12.2px;color:#f07022'>www.<span style='color:#fff'>ideastatica</span>.com</span><svg style='position:absolute;left:0;top:0' width='1919' height='1149'><path d='M96.6,85 L96.6,101.2 L74.8,101.2 L74.8,82.6 L82.6,75.3 L87.2,75.3 M74.8,82.6 L82.6,82.6 L82.6,75.3' fill='none' stroke='#000' stroke-width='1.35'/><path d='M96.4,70 L96.4,81 M91,75.4 L101.8,75.4' fill='none' stroke='#f07022' stroke-width='1.35'/><path d='M112.8,82.8 L120.6,75.3 L134.4,75.3 L134.4,100.6 L112.8,100.6' fill='none' stroke='#000' stroke-width='1.35' stroke-linejoin='round'/><path d='M112.8,100.6 L112.8,82.8 L120.6,82.8 L120.6,75.3' fill='none' stroke='#666' stroke-width='1.3'/><path d='M125.3,70.4 L139.3,70.4 L139.3,96.7' fill='none' stroke='#f5955a' stroke-width='1.35'/><path d='M168.2,71 L163.6,75.3 L168.2,79.8 M163.6,75.3 L181.3,75.3 A13,13 0 0 1 181.3,101.3 L164,101.3' fill='none' stroke='#000' stroke-width='1.35'/><path d='M228.3,71 L232.9,75.3 L228.3,79.8 M232.9,75.3 L215,75.3 A13,13 0 0 0 215,101.3 L231.8,101.3' fill='none' stroke='#b9b9b9' stroke-width='1.35'/><path d='M255.5,70 L255.5,94.4 M251,89.8 L255.5,94.4 L260,89.8' fill='none' stroke='#f07022' stroke-width='1.35'/><path d='M239.4,94.6 L239.4,101.2 L270.8,101.2 L270.8,94.6' fill='none' stroke='#000' stroke-width='1.35'/><path d='M305.24,75.03 L306.64,74.64 L306.85,70.55 L311.15,70.55 L311.36,74.64 L312.76,75.03 L314.10,75.58 L315.37,76.30 L318.40,73.55 L321.45,76.60 L318.70,79.63 L319.42,80.90 L319.97,82.24 L320.36,83.64 L324.45,83.85 L324.45,88.15 L320.36,88.36 L319.97,89.76 L319.42,91.10 L318.70,92.37 L321.45,95.40 L318.40,98.45 L315.37,95.70 L314.10,96.42 L312.76,96.97 L311.36,97.36 L311.15,101.45 L306.85,101.45 L306.64,97.36 L305.24,96.97 L303.90,96.42 L302.63,95.70 L299.60,98.45 L296.55,95.40 L299.30,92.37 L298.58,91.10 L298.03,89.76 L297.64,88.36 L293.55,88.15 L293.55,83.85 L297.64,83.64 L298.03,82.24 L298.58,80.90 L299.30,79.63 L296.55,76.60 L299.60,73.55 L302.63,76.30 L303.90,75.58Z' fill='none' stroke='#000' stroke-width='1.3' stroke-linejoin='round'/><path d='M304.2,82.5 L299.8,86.5 L304.2,90.5 M314,82.5 L318.4,86.5 L314,90.5 M311,78 L307,94' fill='none' stroke='#000' stroke-width='1.35'/><path d='M355.2,75.5 L370,75.5 L386.8,84.6 L386.8,96.6 L371.3,96.6 L355.2,86.2 Z M355.2,75.5 L371.3,84.6 L386.8,84.6 M371.3,84.6 L371.3,96.6' fill='none' stroke='#000' stroke-width='1.35' stroke-linejoin='round'/><rect x='406.5' y='69.4' width='18.9' height='30.8' fill='none' stroke='#000' stroke-width='1.35'/><circle cx='410.9' cy='74.2' r='1.6' fill='none' stroke='#000' stroke-width='1.1'/><circle cx='420.9' cy='74.2' r='1.6' fill='none' stroke='#000' stroke-width='1.1'/><circle cx='410.9' cy='96' r='1.6' fill='none' stroke='#000' stroke-width='1.1'/><circle cx='420.9' cy='96' r='1.6' fill='none' stroke='#000' stroke-width='1.1'/><path d='M449.4,87.3 L449.4,69.6 M445.6,73.3 L449.4,69.6 L453.2,73.3 M449.4,87.3 L467.3,87.3 M463.5,83.5 L467.3,87.3 L463.5,91.1 M449.4,87.3 L436.6,100.1 M436.6,94.8 L436.6,100.1 L441.9,100.1' fill='none' stroke='#000' stroke-width='1.35'/><path d='M500.6,75.4 L484.6,75.4 L484.6,101.4 L510.5,101.4 L510.5,85.2' fill='none' stroke='#000' stroke-width='1.35'/><circle cx='496.5' cy='83.3' r='1.7' fill='#000'/><path d='M484.8,101 L491.3,92.4 L496.9,96.1 L505,88.5 L510.5,93.5' fill='none' stroke='#000' stroke-width='1.35'/><path d='M510.4,70.4 L510.4,80.4 M505.4,75.4 L515.4,75.4' fill='none' stroke='#f07022' stroke-width='1.35'/><rect x='523.3' y='75.4' width='26' height='26' fill='none' stroke='#000' stroke-width='1.35'/><path d='M527.5,70.4 L554.6,70.4 L554.6,97.2' fill='none' stroke='#000' stroke-width='1.35'/><circle cx='535.4' cy='83.3' r='1.7' fill='#000'/><path d='M523.5,101 L530,92.4 L535.6,96.1 L543.5,88.5 L549.2,93.5' fill='none' stroke='#000' stroke-width='1.35'/><rect x='571.8' y='67.8' width='53.4' height='32.4' fill='none' stroke='#c8c8c8' stroke-width='1'/><rect x='583.7' y='68.9' width='30.8' height='30.4' fill='none' stroke='#000' stroke-width='1.6'/><path d='M586,76.3 L596.5,76.3 M591.3,71.1 L591.3,81.5 M602.2,76.3 L611.6,76.3 M587.8,87.9 L595,95.3 M595,87.9 L587.8,95.3 M602.2,91.4 L611.6,91.4' fill='none' stroke='#f07022' stroke-width='1.35' stroke-width='1.3'/><circle cx='606.9' cy='87.1' r='1' fill='#f07022'/><circle cx='606.9' cy='95.8' r='1' fill='#f07022'/><path d='M595.6,119.8 L599.1,123.4 L602.6,119.8' fill='none' stroke='#000' stroke-width='1.35' stroke-width='1.2'/><path d='M654.37,71.43 A15.4,15.4 0 1 0 661.84,81.17' fill='none' stroke='#000' stroke-width='1.35' stroke-width='1.3'/><path d='M651.10,74.52 A11.2,11.2 0 1 0 658.08,84.31' fill='none' stroke='#000' stroke-width='1.35' stroke-width='1.3'/><path d='M639.8,83.8 L642.9,80.7 L647.1,83.6 L659.4,71.3 L662.7,74.4 L647.1,90 Z' fill='#e2e4e6' stroke='#f07022' stroke-width='1.05' stroke-linejoin='miter'/><path d='M669.4,69 L669.4,100.3 L679.9,84.2 L700.7,84.2' fill='none' stroke='#000' stroke-width='1.35'/><path d='M669.4,100.3 L700.7,100.3' fill='none' stroke='#f07022' stroke-width='1.35'/><circle cx='691.6999999999999' cy='71.5' r='2.1' fill='none' stroke='#f07022' stroke-width='1.35' stroke-width='1.1'/><circle cx='698.5999999999999' cy='77.3' r='2.1' fill='none' stroke='#f07022' stroke-width='1.35' stroke-width='1.1'/><path d='M690.1999999999999,79.6 L699.5999999999999,69.2' fill='none' stroke='#f07022' stroke-width='1.35' stroke-width='1.1'/><path d='M728.3,71 L728.3,99' stroke='#bdbdbd' stroke-width='1.3'/><path d='M728.3,71 C738,74 737,80 730,85.5 C721,91 721,97 728.3,99' fill='none' stroke='#f8cbb0' stroke-width='1.2'/><circle cx='728.3' cy='70.8' r='1.8' fill='#f8cbb0'/><circle cx='728.3' cy='99' r='1.8' fill='#f8cbb0'/><rect x='763.4' y='84.6' width='31.1' height='15.8' fill='none' stroke='#000' stroke-width='1.35' stroke-width='1.5'/><path d='M763.40,91.00 L769.80,84.60 M763.40,97.40 L776.20,84.60 M766.80,100.40 L782.60,84.60 M773.20,100.40 L789.00,84.60 M779.60,100.40 L794.50,85.50 M786.00,100.40 L794.50,91.90 M792.40,100.40 L794.50,98.30' stroke='#000' stroke-width='1'/><circle cx='785.4' cy='71.5' r='2.1' fill='none' stroke='#f07022' stroke-width='1.35' stroke-width='1.1'/><circle cx='792.3' cy='77.3' r='2.1' fill='none' stroke='#f07022' stroke-width='1.35' stroke-width='1.1'/><path d='M783.9,79.6 L793.3,69.2' fill='none' stroke='#f07022' stroke-width='1.35' stroke-width='1.1'/><rect x='808.7' y='85.8' width='30.6' height='15.4' fill='none' stroke='#000' stroke-width='1.35' stroke-width='1.3'/><path d='M812,89.6 L836,89.6 M812,93.3 L836,93.3 M812,97.4 L836,97.4' fill='none' stroke='#f07022' stroke-width='1.35' stroke-width='1.1'/><path d='M823.4,70 L823.4,95.3' fill='none' stroke='#000' stroke-width='1.35' stroke-width='1.3'/><rect x='803' y='64.8' width='43' height='80' rx='14' ry='14' fill='none' stroke='#ff0000' stroke-width='4'/><path d='M957.4,69 L957.4,100.3' fill='none' stroke='#f07022' stroke-width='1.35'/><path d='M957.4,100.3 L968,84.3 L988.9,84.3 M957.4,100.3 L988.9,100.3' fill='none' stroke='#000' stroke-width='1.35'/><path d='M1006.4,69 L1006.4,100.3 L1016.5,84.3 L1037.9,84.3' fill='none' stroke='#000' stroke-width='1.35'/><path d='M1006.4,100.3 L1037.9,100.3' fill='none' stroke='#f07022' stroke-width='1.35'/><path d='M1063.9,69 L1063.9,100.8 M1068.1,69 L1068.1,100.8' stroke='#7a7a7a' stroke-width='1.7'/><path d='M1050,77.4 L1062.3,77.4 M1058.4,73.5 L1062.3,77.4 L1058.4,81.30000000000001 M1082,77.4 L1069.7,77.4 M1073.6,73.5 L1069.7,77.4 L1073.6,81.30000000000001' fill='none' stroke='#f07022' stroke-width='1.35' stroke-width='1.2'/><path d='M1050,92.5 L1062.3,92.5 M1058.4,88.6 L1062.3,92.5 L1058.4,96.4 M1082,92.5 L1069.7,92.5 M1073.6,88.6 L1069.7,92.5 L1073.6,96.4' fill='none' stroke='#f07022' stroke-width='1.35' stroke-width='1.2'/><rect x='1099.3' y='84.4' width='31.2' height='16.1' fill='none' stroke='#000' stroke-width='1.35' stroke-width='1.5'/><path d='M1099.30,90.80 L1105.70,84.40 M1099.30,97.20 L1112.10,84.40 M1102.40,100.50 L1118.50,84.40 M1108.80,100.50 L1124.90,84.40 M1115.20,100.50 L1130.50,85.20 M1121.60,100.50 L1130.50,91.60 M1128.00,100.50 L1130.50,98.00' stroke='#000' stroke-width='1'/><path d='M1110.5,69 L1110.5,83.3 M1106.5,79.3 L1110.5,83.3 L1114.5,79.3' fill='none' stroke='#f07022' stroke-width='1.35' stroke-width='1.2'/><path d='M1118.3,69 L1118.3,83.3 M1114.3,79.3 L1118.3,83.3 L1122.3,79.3' fill='none' stroke='#f07022' stroke-width='1.35' stroke-width='1.2'/><path d='M1126.3,69 L1126.3,83.3 M1122.3,79.3 L1126.3,83.3 L1130.3,79.3' fill='none' stroke='#f07022' stroke-width='1.35' stroke-width='1.2'/><path d='M1148.4,69.5 L1148.4,100.3 M1152.5,69.5 L1152.5,100.3' fill='none' stroke='#000' stroke-width='1.35' stroke-width='1.3'/><path d='M1152.5,77.6 L1169.5,77.6 M1165.5,73.6 L1169.5,77.6 L1165.5,81.6 M1152.5,92.2 L1163,92.2 M1159,88.2 L1163,92.2 L1159,96.2' fill='none' stroke='#f07022' stroke-width='1.35' stroke-width='1.2'/><path d='M1184.5,69 L1184.5,100.8 M1194.4,69 L1194.4,100.8 M1203.6,69 L1203.6,100.8 M1178,75.3 L1209.9,75.3 M1178,84.3 L1209.9,84.3 M1178,94.6 L1209.9,94.6' fill='none' stroke='#000' stroke-width='1.35' stroke-width='1.3'/><g fill='none' stroke='#c4c4c4' stroke-width='1.1'><path d='M1232,69.5 Q1229,85 1233,100.5 M1241.5,69.5 Q1238,84 1240,100.5 M1250.5,69.5 Q1248,84 1249.5,100.5'/><path d='M1225.5,74.5 Q1240,79 1256.5,74 M1225.5,84 Q1240,80 1256.5,84.5 M1225.5,93.5 Q1240,88 1256.5,93'/></g><path d='M866.8,169.6 L881.3,169.6 M868.8,167.4 L866.8,169.6 L868.8,171.8 M879.3,167.4 L881.3,169.6 L879.3,171.8' fill='none' stroke='#000' stroke-width='1.35' stroke-width='1.2'/><rect x='866.9' y='175.7' width='14.6' height='5.8' fill='none' stroke='#000' stroke-width='1.35' stroke-width='1.3'/><path d='M870.2,175.7 L870.2,178 M873.5,175.7 L873.5,178.5 M876.8,175.7 L876.8,178 M880,175.7 L880,178' stroke='#000' stroke-width='1'/><path d='M899.5,171.5 L899.5,167.5 L903.5,167.5 M899.5,167.5 L903,171 M912.8,171.5 L912.8,167.5 L908.8,167.5 M912.8,167.5 L909.3,171 M899.5,176.5 L899.5,180.5 L903.5,180.5 M899.5,180.5 L903,177 M912.8,176.5 L912.8,180.5 L908.8,180.5 M912.8,180.5 L909.3,177' fill='none' stroke='#000' stroke-width='1.35' stroke-width='1.2'/><path d='M932.5,168.5 Q925,172 927,181 M928.5,168 L932.8,168.2 L932.5,172.8 M935.5,180.5 Q943,176 940.5,166.5 M935.2,176 L935.2,180.6 L939.8,180.6' fill='none' stroke='#000' stroke-width='1.35' stroke-width='1.3'/><path d='M950.5,172.8 L954,176.3 L957.5,172.8' fill='none' stroke='#000' stroke-width='1.35' stroke-width='1.1' stroke='#444'/><path d='M962.6,160.5 L962.6,187.5' stroke='#cfcfcf' stroke-width='1'/><path d='M970,166.5 L970,178.5 L983,178.5 M967.5,169.5 L980,169.5 L980,181.5' fill='none' stroke='#c8c8c8' stroke-width='1.3'/><path d='M991.3,172.8 L994.8,176.3 L998.3,172.8' fill='none' stroke='#444' stroke-width='1.1'/><path d='M1011.5,181.2 L1011.5,170.5 L1015.5,166.5 L1026.5,166.5 L1026.5,177.3 L1022.3,181.2 Z M1011.5,170.5 L1022.3,170.5 L1026.5,166.5 M1022.3,170.5 L1022.3,181.2' fill='none' stroke='#000' stroke-width='1.3' stroke-linejoin='round'/><path d='M1015.5,166.5 L1015.5,177.3 L1011.5,181.2 M1015.5,177.3 L1019,177.3' fill='none' stroke='#000' stroke-width='1'/><path d='M1043.5,181.2 L1043.5,170.5 L1047.5,166.5 L1058.5,166.5 L1058.5,177.3 L1054.3,181.2 Z' fill='#cfcfcf'/><path d='M1043.5,181.2 L1043.5,170.5 L1047.5,166.5 L1058.5,166.5 L1058.5,177.3 L1054.3,181.2 Z M1043.5,170.5 L1054.3,170.5 L1058.5,166.5 M1054.3,170.5 L1054.3,181.2' fill='none' stroke='#000' stroke-width='1.3' stroke-linejoin='round'/><path d='M1047.5,166.5 L1047.5,177.3 L1043.5,181.2 M1047.5,177.3 L1051,177.3' fill='none' stroke='#000' stroke-width='1'/><path d='M1075.5,181.2 L1075.5,170.5 L1079.5,166.5 L1090.5,166.5 L1090.5,177.3 L1086.3,181.2 Z' fill='#000'/><path d='M1086.3,181.2 L1086.3,170.5 L1090.5,166.5' fill='none' stroke='#fff' stroke-width='1'/><path d='M1099.4,160.5 L1099.4,187.5' stroke='#cfcfcf' stroke-width='1'/><path d='M1108.3,170.5 L1116,168 L1123.6,168.9 L1123.6,173 L1111.3,179.7 L1108.8,174.2 Z M1108.3,170.5 L1111.8,172.5 L1123.6,168.9 M1111.8,172.5 L1111.3,179.7' fill='none' stroke='#000' stroke-width='1.35' stroke-width='1.2' stroke-linejoin='round'/><path d='M1146.3,166 L1146.3,182 M1149.4,166 L1149.4,182' fill='none' stroke='#c8c8c8' stroke-width='1.1'/><path d='M1145,172 C1137,173.5 1139,178 1145,177.6 M1151,172 C1159,173 1157.5,178.5 1151.5,178' fill='none' stroke='#d0d0d0' stroke-width='1.1'/><path d='M1143.5,175.5 L1146,177.6 L1143.5,179.6 Z' fill='#c8c8c8'/><path d='M1172.5,173.5 L1180.1,166.9 L1187.7,173.5 L1185.5,173.5 L1185.5,180.5 L1182,180.5 L1182,175.5 L1178.2,175.5 L1178.2,180.5 L1174.7,180.5 L1174.7,173.5 Z' fill='none' stroke='#000' stroke-width='1.35' stroke-width='1' stroke-linejoin='round'/></svg><svg style='position:absolute;left:0;top:0' width='1919' height='1149'><defs>
<linearGradient id='gRodR' x1='0' x2='1'><stop offset='0' stop-color='#e82a1a'/><stop offset='0.45' stop-color='#c80c0c'/><stop offset='1' stop-color='#6a0606'/></linearGradient>
<linearGradient id='gRodG' x1='0' x2='1'><stop offset='0' stop-color='#b0a094'/><stop offset='0.4' stop-color='#9a8a80'/><stop offset='1' stop-color='#5e5048'/></linearGradient>
<linearGradient id='gColL' x1='0' x2='0' y1='0' y2='1'><stop offset='0' stop-color='#a8a8a8'/><stop offset='0.7' stop-color='#a3a3a3'/><stop offset='1' stop-color='#9a9a9a'/></linearGradient>
<linearGradient id='gInR' x1='0' x2='0.3' y1='0' y2='1'><stop offset='0' stop-color='#a2a2a2'/><stop offset='1' stop-color='#505050'/></linearGradient>
<linearGradient id='gInL' x1='0' x2='1' y1='0' y2='0.6'><stop offset='0' stop-color='#555'/><stop offset='1' stop-color='#303030'/></linearGradient>
<linearGradient id='gPlate' x1='0' x2='1' y1='0' y2='1'><stop offset='0' stop-color='#8ccc2a'/><stop offset='0.5' stop-color='#6eaa1c'/><stop offset='1' stop-color='#84c424'/></linearGradient>
<linearGradient id='gStG' x1='0' x2='1' y1='0' y2='1'><stop offset='0' stop-color='#5c9414'/><stop offset='1' stop-color='#8cc82a'/></linearGradient>
<linearGradient id='gStGray' x1='0' x2='0.4' y1='0' y2='1'><stop offset='0' stop-color='#b4b4b4'/><stop offset='1' stop-color='#8c8c8c'/></linearGradient>
<linearGradient id='gStDark' x1='0' x2='1' y1='0' y2='1'><stop offset='0' stop-color='#4a4a4a'/><stop offset='1' stop-color='#383838'/></linearGradient>
<linearGradient id='gNut' x1='0' x2='1'><stop offset='0' stop-color='#c8c8c8'/><stop offset='0.5' stop-color='#9a9a9a'/><stop offset='1' stop-color='#6a6a6a'/></linearGradient>
<linearGradient id='gNutR' x1='0' x2='1'><stop offset='0' stop-color='#ff2a1a'/><stop offset='0.5' stop-color='#d00c0c'/><stop offset='1' stop-color='#7a0000'/></linearGradient>
</defs><polygon points='97.5,788.3 460.2,562.0 1047.0,716.0 1047.0,836.5 684.3,1062.8 97.5,908.8' fill='#eacab7'/><polygon points='97.5,788.3 460.2,562.0 460.2,682.5 97.5,908.8' fill='#d9bfb3'/><polygon points='684.3,942.3 1047.0,716.0 1047.0,836.5 684.3,1062.8' fill='#d9bfb3'/><path d='M97.5,788.3 L460.2,562 M460.2,562 L1047,716 M1047,716 L684.3,942.3 M684.3,942.3 L97.5,788.3 M97.5,908.8 L460.2,682.5 M460.2,682.5 L1047,836.5 M1047,836.5 L684.3,1062.8 M684.3,1062.8 L97.5,908.8 M97.5,788.3 L97.5,908.8 M1047,716 L1047,836.5 M684.3,942.3 L684.3,1062.8 M460.2,562 L460.2,682.5' stroke='#f0803e' stroke-width='1' fill='none' opacity='0.9'/><path d='M400.5,758 L415,758 L415,857.5 Q407.7,862.5 400.5,857.5 Z' fill='url(#gRodR)'/><path d='M611,826 L626,826 L626,912.5 Q618.5,917.5 611,912.5 Z' fill='url(#gRodG)'/><path d='M730,736 L744,736 L744,839.5 Q737,844.5 730,839.5 Z' fill='url(#gRodG)'/><polygon points='371.0,755.0 626.0,821.0 626.0,831.0 371.0,764.5' fill='#80c020'/><polygon points='626.0,821.0 772.5,730.0 772.5,738.5 626.0,831.0' fill='#4c7c12'/><polygon points='371.0,755.0 626.0,821.0 772.5,730.0 517.5,664.0' fill='url(#gPlate)'/><path d='M371,755 L626,821 L772.5,730 M371,764.5 L626,831 L772.5,738.5 M626,821 L626,831 M371,755 L371,764.5 M772.5,730 L772.5,738.5' stroke='#a8f038' stroke-width='1' fill='none'/><polygon points='463.7,749.0 566.0,775.5 566.0,780.0 460.0,754.0' fill='#a4d850'/><polygon points='689.5,741.0 658.5,757.5 655.0,762.0 692.0,745.0' fill='#a4d850'/><polygon points='443.7,648.5 451.5,650.0 451.5,735.0 434.0,734.0 409.6,727.7 409.6,720.0 413.3,710.6' fill='url(#gStGray)'/><path d='M409.6,727.7 L409.6,720 L413.3,710.6 L443.7,648.5 L451.5,650' stroke='#c8c8c8' stroke-width='0.8' fill='none'/><polygon points='451.0,429.0 607.0,471.0 607.0,785.0 451.0,743.0' fill='url(#gColL)'/><polygon points='607.0,471.0 693.0,420.5 693.0,734.5 607.0,785.0' fill='#4b4b4b'/><rect x='451' y='430' width='7' height='313' fill='#b0b0b0'/><path d='M451.5,430 L451.5,743 M454.5,430 L454.5,744 M457.5,431 L457.5,745' stroke='#d8d8d8' stroke-width='0.9'/><polygon points='597,468 620,466 620,786 597,780' fill='#8a8a8a'/><path d='M598,468 L598,781 M604.5,470 L604.5,783 M612,470 L612,785 M619.5,467 L619.5,786' stroke='#d2d2d2' stroke-width='1'/><rect x='690' y='422' width='4' height='313' fill='#8a8a8a'/><path d='M693.5,421 L693.5,735 M690.5,423 L690.5,736' stroke='#c8c8c8' stroke-width='0.8'/><path d='M456.79,430.56 Q451.00,429.00 456.16,425.94 L531.84,381.06 Q537.00,378.00 542.79,379.58 L687.21,418.92 Q693.00,420.50 687.83,423.54 L612.17,467.96 Q607.00,471.00 601.21,469.44 Z' fill='#bdbdbd'/><polygon points='460.0,430.5 536.0,381.5 536.0,452.5' fill='url(#gInL)'/><polygon points='536.0,381.5 684.5,420.5 606.8,466.8 536.0,452.5' fill='url(#gInR)'/><rect x='531' y='383' width='15' height='72' fill='#6a6a6a'/><path d='M531.5,384 L531.5,453 M536,382 L536,454 M541.5,383 L541.5,455 M545.5,384 L545.5,456' stroke='#c8c8c8' stroke-width='0.9'/><path d='M456.79,430.56 Q451.00,429.00 456.16,425.94 L531.84,381.06 Q537.00,378.00 542.79,379.58 L687.21,418.92 Q693.00,420.50 687.83,423.54 L612.17,467.96 Q607.00,471.00 601.21,469.44 Z' stroke='#cacaca' stroke-width='1.5' fill='none'/><path d='M464.85,431.70 Q460.00,430.50 464.20,427.79 L531.80,384.21 Q536.00,381.50 540.84,382.77 L679.66,419.23 Q684.50,420.50 680.20,423.06 L611.10,464.24 Q606.80,466.80 601.95,465.60 Z' stroke='#d4d4d4' stroke-width='1' fill='none'/><path d='M451,433 L607,475.5 L693,425' stroke='#d0d0d0' stroke-width='1.2' fill='none'/><path d='M572.5,307 L572.5,462' stroke='#84b2ee' stroke-width='1.1' stroke-dasharray='1,4.4,6.2,3.9'/><polygon points='461.4,663.0 468.7,663.0 468.7,752.0 461.4,752.0' fill='#8e8e8e'/><path d='M461.8,663 L461.8,752 M468.3,663 L468.3,752' stroke='#dadada' stroke-width='0.9'/><polygon points='458.5,666.0 461.0,666.0 461.0,752.0 436.4,766.0' fill='url(#gStDark)'/><path d='M453.5,663.7 L459.5,666.2 Q446,715 435.2,771 L430.3,770 Q441,712 453.5,663.7 Z' fill='#c4c4c4' stroke='#dedede' stroke-width='0.7'/><polygon points='453.5,663.5 462.0,661.0 468.7,662.5 460.0,666.0' fill='#d0d0d0'/><polygon points='436.0,767.0 461.5,752.0 466.0,754.5 441.0,770.5' fill='#5e9418' stroke='#a8f040' stroke-width='0.6'/><polygon points='593.8,698.0 600.5,698.0 600.5,786.0 593.8,787.0' fill='#8e8e8e'/><path d='M594.2,698 L594.2,786 M600,698 L600,786' stroke='#dadada' stroke-width='0.9'/><polygon points='591.6,698.8 594.0,699.0 594.0,787.0 570.2,805.7' fill='url(#gStDark)'/><path d='M586.4,697 L591.6,698.8 Q577,750 568.7,805.7 L562.8,803 Q573,748 586.4,697 Z' fill='#c4c4c4' stroke='#dedede' stroke-width='0.7'/><polygon points='570.0,805.0 594.5,787.0 599.0,789.5 575.0,808.5' fill='#5e9418' stroke='#a8f040' stroke-width='0.6'/><polygon points='624.7,694.8 633.8,696.7 665.8,784.4 665.8,797.2 624.7,784.4' fill='url(#gStGray)'/><path d='M633.8,696.7 L665.8,784.4 L665.8,797.2' stroke='#5a5a5a' stroke-width='2.2' fill='none'/><path d='M632,697 L663,783' stroke='#d8d8d8' stroke-width='0.8' fill='none'/><polygon points='617.4,696.7 624.7,694.8 624.7,784.4 617.4,786.0' fill='#6aae1a'/><path d='M617.8,696 L617.8,786 M624.3,694.5 L624.3,785' stroke='#a8f040' stroke-width='1'/><path d='M624.7,784.4 L665.8,797.2' stroke='#d8d8d8' stroke-width='1.6'/><polygon points='685.9,652.8 699.6,654.6 734.3,739.6 734.3,758.8 691.4,743.3 685.9,741.4' fill='url(#gStG)'/><path d='M699.6,654.6 L734.3,739.6 L734.3,758.8' stroke='#3f6a0e' stroke-width='2.4' fill='none'/><path d='M697.5,655 L731.5,739' stroke='#a8f040' stroke-width='0.9' fill='none'/><polygon points='685.5,652.5 691.4,653.2 691.4,743.3 685.5,741.4' fill='#88c82a'/><path d='M685.8,652 L685.8,742 M691,653 L691,744 M685.8,652.5 L699.6,654.6' stroke='#a8f040' stroke-width='1'/><path d='M691.4,743.3 L734.3,758.8' stroke='#a8e048' stroke-width='2'/><ellipse cx='408.1' cy='752' rx='13' ry='5' fill='#e01010' stroke='#ff5050' stroke-width='0.8'/><path d='M397,741 L403.272,743.75 L403.272,753.75 L397,751 Z' fill='#ee2020' stroke='#ff5050' stroke-width='0.6'/><path d='M403.272,743.75 L412.68,743.75 L412.68,753.75 L403.272,753.75 Z' fill='#c00000' stroke='#ff5050' stroke-width='0.6'/><path d='M412.68,743.75 L419.4,741 L419.4,751 L412.68,753.75 Z' fill='#7a0000' stroke='#ff5050' stroke-width='0.6'/><path d='M397,741 L403.272,738.25 L412.68,738.25 L419.4,741 L412.68,743.75 L403.272,743.75 Z' fill='#ff3a3a' stroke='#ff5050' stroke-width='0.6'/><path d='M401.2,741 L401.2,731 L415,731 L415,741 Z' fill='url(#gNutR)'/><ellipse cx='408.1' cy='741' rx='6.900000000000006' ry='2.475' fill='url(#gNutR)'/><ellipse cx='408.1' cy='731' rx='6.900000000000006' ry='2.475' fill='#ff4a4a' stroke='#ff5050' stroke-width='0.5'/><ellipse cx='618.4' cy='807' rx='13' ry='5' fill='#b4b4b4' stroke='#e4e4e4' stroke-width='0.8'/><path d='M608,796 L613.88,798.75 L613.88,809.75 L608,807 Z' fill='#c4c4c4' stroke='#e4e4e4' stroke-width='0.6'/><path d='M613.88,798.75 L622.7,798.75 L622.7,809.75 L613.88,809.75 Z' fill='#a0a0a0' stroke='#e4e4e4' stroke-width='0.6'/><path d='M622.7,798.75 L629,796 L629,807 L622.7,809.75 Z' fill='#6e6e6e' stroke='#e4e4e4' stroke-width='0.6'/><path d='M608,796 L613.88,793.25 L622.7,793.25 L629,796 L622.7,798.75 L613.88,798.75 Z' fill='#bdbdbd' stroke='#e4e4e4' stroke-width='0.6'/><path d='M611.5,796 L611.5,788 L625.3,788 L625.3,796 Z' fill='url(#gNut)'/><ellipse cx='618.4' cy='796' rx='6.899999999999977' ry='2.475' fill='url(#gNut)'/><ellipse cx='618.4' cy='788' rx='6.899999999999977' ry='2.475' fill='#c8c8c8' stroke='#e4e4e4' stroke-width='0.5'/><ellipse cx='739' cy='734' rx='11' ry='4.5' fill='#b0b0b0' stroke='#e4e4e4' stroke-width='0.8'/><path d='M729,724 L734.32,726.475 L734.32,734.475 L729,732 Z' fill='#c4c4c4' stroke='#e4e4e4' stroke-width='0.6'/><path d='M734.32,726.475 L742.3,726.475 L742.3,734.475 L734.32,734.475 Z' fill='#a0a0a0' stroke='#e4e4e4' stroke-width='0.6'/><path d='M742.3,726.475 L748,724 L748,732 L742.3,734.475 Z' fill='#6e6e6e' stroke='#e4e4e4' stroke-width='0.6'/><path d='M729,724 L734.32,721.525 L742.3,721.525 L748,724 L742.3,726.475 L734.32,726.475 Z' fill='#bdbdbd' stroke='#e4e4e4' stroke-width='0.6'/><path d='M731,724 L731,713 L744.4,713 L744.4,724 Z' fill='url(#gNut)'/><ellipse cx='737.7' cy='724' rx='6.699999999999989' ry='2.2275' fill='url(#gNut)'/><ellipse cx='737.7' cy='713' rx='6.699999999999989' ry='2.2275' fill='#c8c8c8' stroke='#e4e4e4' stroke-width='0.5'/></svg><svg style='position:absolute;left:0;top:0' width='1919' height='1149'><path fill-rule='evenodd' fill='#dddddd' d='M1113.4,263.6 A37.6,20.9 0 1 0 1188.6,263.6 A37.6,20.9 0 1 0 1113.4,263.6 Z M1121.8,263.6 A29.2,13.2 0 1 0 1180.2,263.6 A29.2,13.2 0 1 0 1121.8,263.6 Z'/><polygon points='1145.0,220.1 1175.0,226.7 1172.9,256.3 1157.6,274.1 1127.3,261.9 1124.2,231.6' fill='#b3b3b3'/><path d='M1124.2,231.6 L1145,220.1 M1145,220.1 L1175,226.7 M1175,226.7 L1159,240.3 M1159,240.3 L1124.2,231.6 M1124.2,231.6 L1127.3,261.9 M1159,240.3 L1157.6,274.1 M1175,226.7 L1172.9,256.3 M1127.3,261.9 L1157.6,274.1 M1157.6,274.1 L1172.9,256.3 M1145,220.1 L1145.4,247.6 M1145.4,247.6 L1127.3,261.9 M1145.4,247.6 L1172.9,256.3' stroke='#7c7c7c' stroke-width='1' fill='none'/><path d='M1148,239 L1150,236 M1167,251 L1168,246 M1137,251 L1140,248 M1143,249 L1143,255' stroke='#f4f4f4' stroke-width='1.2'/><path d='M1122,250 L1127,247 M1125,245 L1124,252' stroke='#6a6a6a' stroke-width='1.3'/><path d='M1123,284 L1131,276 M1129,275 L1130,281 L1136,277' stroke='#7a7a7a' stroke-width='1.6' fill='none'/><path d='M1180,268 L1191,271.5' stroke='#6a6a6a' stroke-width='1' stroke-dasharray='2,1.5'/></svg><div style='position:absolute;left:520px;top:583px;width:30.5px;height:18.5px;background:#fff;'></div><span class='t' style='left:523.89px;top:588px;font-size:11.00px;font-weight:400;color:#111;font-style:normal;'>COL</span></body></html>
